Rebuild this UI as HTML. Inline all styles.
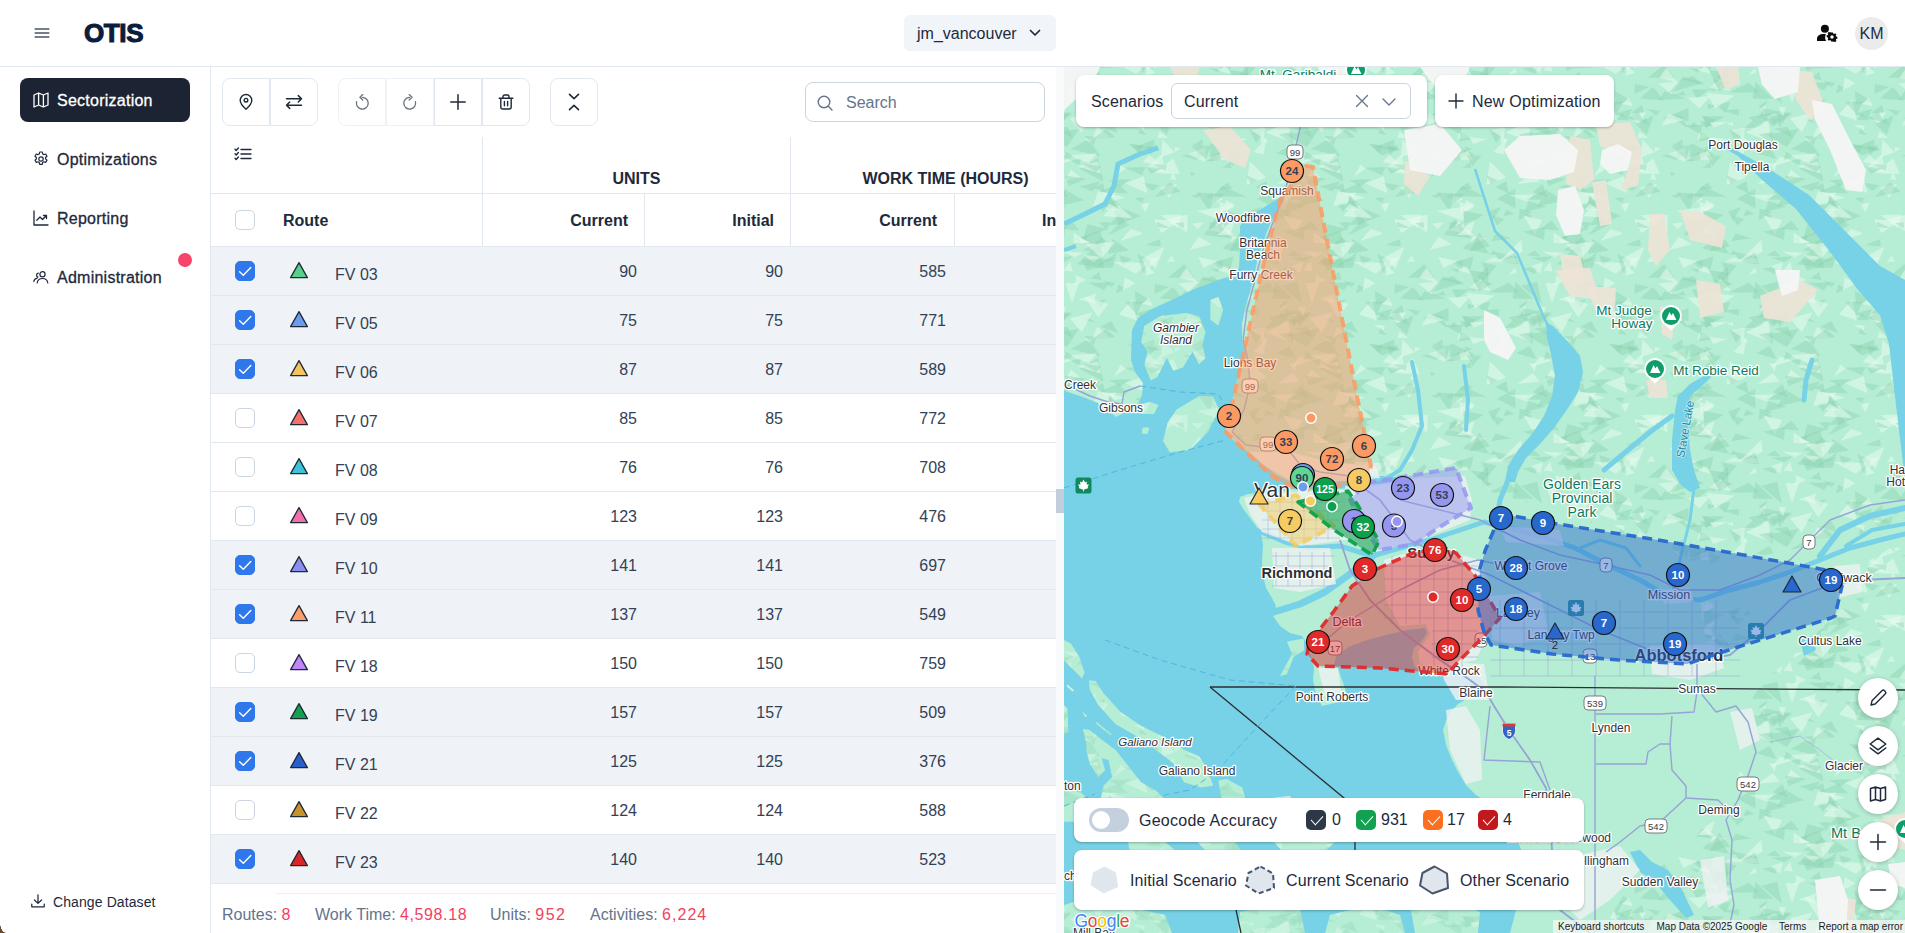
<!DOCTYPE html>
<html lang="en">
<head>
<meta charset="utf-8">
<title>OTIS - Sectorization</title>
<style>
*{box-sizing:border-box;margin:0;padding:0}
html,body{width:1905px;height:933px;overflow:hidden;background:#fff}
body{font-family:"Liberation Sans",Arial,sans-serif;color:#1e293b;font-size:16px;position:relative}
.abs{position:absolute}
#header{position:absolute;left:0;top:0;width:1905px;height:67px;border-bottom:1px solid #e2e8f0;background:#fff}
#logo{position:absolute;left:84px;top:17px;font-weight:700;font-size:26px;line-height:32px;color:#0c1c3c;letter-spacing:-0.4px;-webkit-text-stroke:1.1px #0c1c3c}
#dataset{position:absolute;left:904px;top:15px;width:152px;height:36px;background:#f1f5f9;border-radius:6px;font-size:16px;line-height:37px;padding-left:13px;color:#1e293b}
#avatar{position:absolute;left:1855px;top:17px;width:33px;height:33px;border-radius:50%;background:#ebebeb;text-align:center;line-height:34px;font-size:16px;color:#1f2f46}
#sidebar{position:absolute;left:0;top:67px;width:211px;height:866px;border-right:1px solid #e2e8f0;background:#fff}
.nav{position:absolute;left:20px;width:170px;height:44px;border-radius:8px;font-size:16px;line-height:46px;color:#1e293b;padding-left:37px;white-space:nowrap;letter-spacing:.25px;-webkit-text-stroke:.3px currentColor}
.nav svg{position:absolute;left:13px;top:14px}
.nav.active{background:#1c2434;color:#fff}
.tbtn{position:absolute;top:78px;height:48px;border:1px solid #e2e8f0;background:#fff}
.tbtn svg{position:absolute;left:50%;top:50%;transform:translate(-50%,-50%)}
#search{position:absolute;left:805px;top:82px;width:240px;height:40px;border:1px solid #cbd5e1;border-radius:8px;font-size:16px;line-height:39px;padding-left:40px;color:#64748b}
.vline{position:absolute;width:1px;background:#e2e8f0}
.hline{position:absolute;height:1px;background:#e2e8f0}
.th{position:absolute;font-weight:700;font-size:16px;color:#1e293b;white-space:nowrap;line-height:20px}
.row{position:absolute;left:211px;width:845px;height:49px;border-bottom:1px solid #e2e8f0}
.row.sel{background:#eff3f8}
.cb{position:absolute;left:24px;top:14px;width:20px;height:20px;border-radius:5px;border:1px solid #cbd5e1;background:#fff}
.cb.on{background:#2e78ec;border-color:#2e78ec}
.cb svg{position:absolute;left:-1px;top:-1px}
.tri{position:absolute;left:78px;top:14px}
.rn{position:absolute;left:124px;top:18px;font-size:16px;line-height:20px;color:#334155;white-space:nowrap}
.num{position:absolute;top:15px;font-size:16px;line-height:20px;color:#334155;text-align:right;white-space:nowrap}
.n1{right:419px}.n2{right:273px}.n3{right:110px}
#footer{position:absolute;left:211px;top:894px;width:845px;height:39px;background:#fff;font-size:16px;line-height:20px;color:#64748b;white-space:nowrap}
#footer span{position:absolute;top:11px}
#footer b{font-weight:400;color:#f43f5e;letter-spacing:.45px}
#gutter{position:absolute;left:1056px;top:67px;width:8px;height:866px;background:#f8fafc}
#map{position:absolute;left:1064px;top:67px;width:841px;height:866px;overflow:hidden;background:#b5ecd3}
.panel{position:absolute;background:#fff;border-radius:8px;box-shadow:0 1px 3px rgba(0,0,0,.18),0 1px 2px rgba(0,0,0,.1)}
.rbtn{position:absolute;left:794px;width:40px;height:40px;border-radius:50%;background:#fff;box-shadow:0 1px 4px rgba(0,0,0,.25)}
.rbtn svg{position:absolute;left:10px;top:10px}
.gc{position:absolute;top:12px;width:20px;height:20px;border-radius:5px}
.gc:after{content:"";position:absolute;left:5px;top:4.500px;width:11px;height:6px;border-left:1.600px solid #fff;border-bottom:1.600px solid #fff;transform:rotate(-48deg) skewX(-6deg);transform-origin:center}
.gt{position:absolute;top:12px;font-size:16px;line-height:20px;color:#1e293b;white-space:nowrap}
.lt{position:absolute;top:21px;font-size:16px;line-height:20px;color:#1e293b;white-space:nowrap;letter-spacing:.12px}
</style>
</head>
<body>
<div id="header">
  <svg class="abs" style="left:33px;top:24px" width="18" height="18" viewBox="0 0 18 18" fill="none" stroke="#475569" stroke-width="1.5" stroke-linecap="round"><path d="M2.2 5.1h13.6M2.2 9h13.6M2.2 12.9h13.6"/></svg>
  <div id="logo">OTIS</div>
  <div id="dataset">jm_vancouver
    <svg class="abs" style="left:124px;top:12px" width="14" height="12" viewBox="0 0 14 12" fill="none" stroke="#1e293b" stroke-width="1.7" stroke-linecap="round" stroke-linejoin="round"><path d="M2.5 3.5 7 8l4.5-4.500"/></svg>
  </div>
  <svg class="abs" style="left:1815px;top:23px" width="24" height="22" viewBox="0 0 24 22" fill="#0b0b0b"><circle cx="9.900" cy="5.800" r="4"/><path d="M2 18v-2.200c0-3 2.700-4.800 6.600-4.800.9 0 1.700.1 2.400.2-.6 1-.9 2-.9 3.200 0 1.300.4 2.500 1.100 3.600z"/><g transform="translate(17 14) scale(.92)"><circle r="6.300" fill="#fff"/><path d="M-1-5h2l.3 1.300 1 .4 1.100-.7 1.400 1.400-.7 1.100.4 1 1.300.3v2l-1.300.3-.4 1 .7 1.100-1.400 1.400-1.100-.7-1 .4L1 5h-2l-.3-1.300-1-.4-1.100.7-1.400-1.400.7-1.100-.4-1L-5.800.2v-2l1.300-.3.4-1-.7-1.100 1.400-1.400 1.100.7 1-.4z"/><circle r="1.900" fill="#fff"/></g></svg>
  <div id="avatar">KM</div>
</div>

<div id="sidebar">
  <div class="nav active" style="top:11px"><svg width="16" height="16" viewBox="0 0 16 16" fill="none" stroke="#fff" stroke-width="1.300" stroke-linejoin="round"><path d="M1 3 5.600 1l4.800 2L15 1v12l-4.600 2-4.800-2L1 15zM5.600 1v12M10.400 3v12"/></svg>Sectorization</div>
  <div class="nav" style="top:70px"><svg width="16" height="16" viewBox="0 0 16 16" fill="none" stroke="#1e293b" stroke-width="1.200" stroke-linejoin="round"><path d="M6.700 1h2.600l.4 1.900 1.200.7 1.800-.6 1.300 2.200-1.400 1.300v1.400l1.400 1.300-1.300 2.200-1.800-.6-1.200.7-.4 1.900H6.700l-.4-1.900-1.200-.7-1.800.6L2 9.200l1.400-1.300V6.500L2 5.200 3.300 3l1.800.6 1.200-.7z"/><circle cx="8" cy="8" r="2.200"/></svg>Optimizations</div>
  <div class="nav" style="top:129px"><svg width="16" height="16" viewBox="0 0 16 16" fill="none" stroke="#1e293b" stroke-width="1.300" stroke-linecap="round" stroke-linejoin="round"><path d="M1 1v14h14"/><path d="M3.800 10.200 7 7l2.500 2.500L13.500 5.500M10.500 5.500h3v3"/></svg>Reporting</div>
  <div class="nav" style="top:188px"><svg width="16" height="16" viewBox="0 0 16 16" fill="none" stroke="#1e293b" stroke-width="1.200" stroke-linecap="round" stroke-linejoin="round"><circle cx="9.500" cy="5.300" r="2.600"/><path d="M4.200 14c.4-2.900 2.500-4.500 5.300-4.500s4.900 1.600 5.300 4.500"/><path d="M5.300 4.200a2 2 0 0 0-.3 3.900M.8 12.500c.3-1.900 1.500-3.100 3.400-3.400"/></svg>Administration</div>
  <div class="abs" style="left:178px;top:186px;width:14px;height:14px;border-radius:50%;background:#f6446a"></div>
  <svg class="abs" style="left:30px;top:826px" width="16" height="16" viewBox="0 0 18 18" fill="none" stroke="#1e293b" stroke-width="1.400" stroke-linecap="round" stroke-linejoin="round"><path d="M9 2v9.500M5 7.800l4 3.900 4-3.900M2 12.500v3h14v-3"/></svg>
  <div class="abs" style="left:53px;top:825px;font-size:14px;line-height:20px;color:#1e293b;white-space:nowrap;letter-spacing:.1px">Change Dataset</div>
</div>

<div class="tbtn" style="left:222px;width:48px;border-radius:8px 0 0 8px"><svg width="18" height="18" viewBox="0 0 18 18" fill="none" stroke="#1e293b" stroke-width="1.400" stroke-linejoin="round"><path d="M9 16.200S3.200 11.300 3.200 7.300a5.800 5.800 0 0 1 11.600 0c0 4-5.800 8.900-5.800 8.900z"/><circle cx="9" cy="7.200" r="1.800"/></svg></div>
<div class="tbtn" style="left:270px;width:48px;border-radius:0 8px 8px 0"><svg width="18" height="18" viewBox="0 0 18 18" fill="none" stroke="#1e293b" stroke-width="1.500" stroke-linecap="round" stroke-linejoin="round"><path d="M1.500 5.800h15M13.300 2.600l3.200 3.200-3.200 3.200M16.500 12.200h-15M4.700 9l-3.200 3.200 3.200 3.200"/></svg></div>
<div class="tbtn" style="left:338px;width:48px;border-radius:8px 0 0 8px;border-color:#eef2f6"><svg width="18" height="18" viewBox="0 0 18 18" fill="none" stroke="#6b7280" stroke-width="1.300" stroke-linecap="round" stroke-linejoin="round"><path d="M9.300 4.300a5.900 5.900 0 1 1-5.700 4.400"/><path d="M9.800 1.600 6.900 4.300l2.900 2.700"/></svg></div>
<div class="tbtn" style="left:386px;width:48px;border-color:#eef2f6"><svg width="18" height="18" viewBox="0 0 18 18" fill="none" stroke="#6b7280" stroke-width="1.300" stroke-linecap="round" stroke-linejoin="round"><path d="M8.700 4.300a5.900 5.900 0 1 0 5.700 4.400"/><path d="M8.200 1.600l2.900 2.700-2.900 2.700"/></svg></div>
<div class="tbtn" style="left:434px;width:48px"><svg width="18" height="18" viewBox="0 0 18 18" fill="none" stroke="#1e293b" stroke-width="1.500" stroke-linecap="round"><path d="M9 1.800v14.400M1.800 9h14.400"/></svg></div>
<div class="tbtn" style="left:482px;width:48px;border-radius:0 8px 8px 0"><svg width="18" height="18" viewBox="0 0 18 18" fill="none" stroke="#1e293b" stroke-width="1.400" stroke-linecap="round" stroke-linejoin="round"><path d="M2.200 5.200h13.600M6 5V3.600c0-1 .7-1.600 1.600-1.600h2.800c.9 0 1.600.6 1.600 1.600V5M3.800 5.400V14c0 1.100.8 2 2 2h6.400c1.200 0 2-.9 2-2V5.400M7.400 8.500v4.200M10.600 8.500v4.200"/></svg></div>
<div class="tbtn" style="left:550px;width:48px;border-radius:8px"><svg width="18" height="22" viewBox="0 0 18 22" fill="none" stroke="#1e293b" stroke-width="1.600" stroke-linecap="round" stroke-linejoin="round"><path d="M4.500 3.300 9 7.600l4.500-4.300M4.500 18.700 9 14.400l4.500 4.300"/></svg></div>
<div id="search"><svg class="abs" style="left:10px;top:11px" width="18" height="18" viewBox="0 0 18 18" fill="none" stroke="#64748b" stroke-width="1.400" stroke-linecap="round"><circle cx="8" cy="8" r="5.800"/><path d="M12.300 12.300 16 16"/></svg>Search</div>

<svg class="abs" style="left:234px;top:146px" width="18" height="16" viewBox="0 0 18 16" fill="none" stroke="#1e293b" stroke-width="1.400" stroke-linecap="round" stroke-linejoin="round"><path d="M7 3.500h10M7 8h10M7 12.500h10M1 3.300l1.200 1.200L4.400 2M1 7.800 2.200 9l2.200-2.500M1 12.300l1.200 1.200 2.200-2.500"/></svg>
<div class="vline" style="left:482px;top:137px;height:109px"></div>
<div class="vline" style="left:790px;top:137px;height:109px"></div>
<div class="vline" style="left:644px;top:194px;height:52px"></div>
<div class="vline" style="left:954px;top:194px;height:52px"></div>
<div class="hline" style="left:211px;top:193px;width:845px"></div>
<div class="hline" style="left:211px;top:246px;width:845px"></div>
<div class="th" style="left:483px;width:307px;top:169px;text-align:center">UNITS</div>
<div class="th" style="left:791px;width:309px;top:169px;text-align:center">WORK TIME (HOURS)</div>
<div class="cb" style="left:235px;top:210px"></div>
<div class="th" style="left:283px;top:211px">Route</div>
<div class="th" style="right:1277px;top:211px">Current</div>
<div class="th" style="right:1131px;top:211px">Initial</div>
<div class="th" style="right:968px;top:211px">Current</div>
<div class="abs" style="left:955px;top:194px;width:101px;height:51px;overflow:hidden"><div class="th" style="left:87px;top:17px">Initial</div></div>
<div class="row sel" style="top:247px"><div class="cb on"><svg width="20" height="20" viewBox="0 0 20 20" fill="none" stroke="#fff" stroke-width="1.400" stroke-linecap="round" stroke-linejoin="round"><path d="M4.600 10.700l3.700 3.600 7.500-7.800"/></svg></div><svg class="tri" width="20" height="18" viewBox="0 0 20 18"><path d="M10 1.600 18.400 16.600H1.600z" fill="#56d08a" stroke="#1f2937" stroke-width="1.300" stroke-linejoin="round"/></svg><div class="rn">FV 03</div><div class="num n1">90</div><div class="num n2">90</div><div class="num n3">585</div></div>
<div class="row sel" style="top:296px"><div class="cb on"><svg width="20" height="20" viewBox="0 0 20 20" fill="none" stroke="#fff" stroke-width="1.400" stroke-linecap="round" stroke-linejoin="round"><path d="M4.600 10.700l3.700 3.600 7.500-7.800"/></svg></div><svg class="tri" width="20" height="18" viewBox="0 0 20 18"><path d="M10 1.600 18.400 16.600H1.600z" fill="#6a9cf0" stroke="#1f2937" stroke-width="1.300" stroke-linejoin="round"/></svg><div class="rn">FV 05</div><div class="num n1">75</div><div class="num n2">75</div><div class="num n3">771</div></div>
<div class="row sel" style="top:345px"><div class="cb on"><svg width="20" height="20" viewBox="0 0 20 20" fill="none" stroke="#fff" stroke-width="1.400" stroke-linecap="round" stroke-linejoin="round"><path d="M4.600 10.700l3.700 3.600 7.500-7.800"/></svg></div><svg class="tri" width="20" height="18" viewBox="0 0 20 18"><path d="M10 1.600 18.400 16.600H1.600z" fill="#f5c45e" stroke="#1f2937" stroke-width="1.300" stroke-linejoin="round"/></svg><div class="rn">FV 06</div><div class="num n1">87</div><div class="num n2">87</div><div class="num n3">589</div></div>
<div class="row" style="top:394px"><div class="cb"></div><svg class="tri" width="20" height="18" viewBox="0 0 20 18"><path d="M10 1.600 18.400 16.600H1.600z" fill="#f8706c" stroke="#1f2937" stroke-width="1.300" stroke-linejoin="round"/></svg><div class="rn">FV 07</div><div class="num n1">85</div><div class="num n2">85</div><div class="num n3">772</div></div>
<div class="row" style="top:443px"><div class="cb"></div><svg class="tri" width="20" height="18" viewBox="0 0 20 18"><path d="M10 1.600 18.400 16.600H1.600z" fill="#3cc3d8" stroke="#1f2937" stroke-width="1.300" stroke-linejoin="round"/></svg><div class="rn">FV 08</div><div class="num n1">76</div><div class="num n2">76</div><div class="num n3">708</div></div>
<div class="row" style="top:492px"><div class="cb"></div><svg class="tri" width="20" height="18" viewBox="0 0 20 18"><path d="M10 1.600 18.400 16.600H1.600z" fill="#f46fa9" stroke="#1f2937" stroke-width="1.300" stroke-linejoin="round"/></svg><div class="rn">FV 09</div><div class="num n1">123</div><div class="num n2">123</div><div class="num n3">476</div></div>
<div class="row sel" style="top:541px"><div class="cb on"><svg width="20" height="20" viewBox="0 0 20 20" fill="none" stroke="#fff" stroke-width="1.400" stroke-linecap="round" stroke-linejoin="round"><path d="M4.600 10.700l3.700 3.600 7.500-7.800"/></svg></div><svg class="tri" width="20" height="18" viewBox="0 0 20 18"><path d="M10 1.600 18.400 16.600H1.600z" fill="#8b8df0" stroke="#1f2937" stroke-width="1.300" stroke-linejoin="round"/></svg><div class="rn">FV 10</div><div class="num n1">141</div><div class="num n2">141</div><div class="num n3">697</div></div>
<div class="row sel" style="top:590px"><div class="cb on"><svg width="20" height="20" viewBox="0 0 20 20" fill="none" stroke="#fff" stroke-width="1.400" stroke-linecap="round" stroke-linejoin="round"><path d="M4.600 10.700l3.700 3.600 7.500-7.800"/></svg></div><svg class="tri" width="20" height="18" viewBox="0 0 20 18"><path d="M10 1.600 18.400 16.600H1.600z" fill="#fc9d6a" stroke="#1f2937" stroke-width="1.300" stroke-linejoin="round"/></svg><div class="rn">FV 11</div><div class="num n1">137</div><div class="num n2">137</div><div class="num n3">549</div></div>
<div class="row" style="top:639px"><div class="cb"></div><svg class="tri" width="20" height="18" viewBox="0 0 20 18"><path d="M10 1.600 18.400 16.600H1.600z" fill="#c084fc" stroke="#1f2937" stroke-width="1.300" stroke-linejoin="round"/></svg><div class="rn">FV 18</div><div class="num n1">150</div><div class="num n2">150</div><div class="num n3">759</div></div>
<div class="row sel" style="top:688px"><div class="cb on"><svg width="20" height="20" viewBox="0 0 20 20" fill="none" stroke="#fff" stroke-width="1.400" stroke-linecap="round" stroke-linejoin="round"><path d="M4.600 10.700l3.700 3.600 7.500-7.800"/></svg></div><svg class="tri" width="20" height="18" viewBox="0 0 20 18"><path d="M10 1.600 18.400 16.600H1.600z" fill="#12a150" stroke="#1f2937" stroke-width="1.300" stroke-linejoin="round"/></svg><div class="rn">FV 19</div><div class="num n1">157</div><div class="num n2">157</div><div class="num n3">509</div></div>
<div class="row sel" style="top:737px"><div class="cb on"><svg width="20" height="20" viewBox="0 0 20 20" fill="none" stroke="#fff" stroke-width="1.400" stroke-linecap="round" stroke-linejoin="round"><path d="M4.600 10.700l3.700 3.600 7.500-7.800"/></svg></div><svg class="tri" width="20" height="18" viewBox="0 0 20 18"><path d="M10 1.600 18.400 16.600H1.600z" fill="#2a5fc9" stroke="#1f2937" stroke-width="1.300" stroke-linejoin="round"/></svg><div class="rn">FV 21</div><div class="num n1">125</div><div class="num n2">125</div><div class="num n3">376</div></div>
<div class="row" style="top:786px"><div class="cb"></div><svg class="tri" width="20" height="18" viewBox="0 0 20 18"><path d="M10 1.600 18.400 16.600H1.600z" fill="#c8922a" stroke="#1f2937" stroke-width="1.300" stroke-linejoin="round"/></svg><div class="rn">FV 22</div><div class="num n1">124</div><div class="num n2">124</div><div class="num n3">588</div></div>
<div class="row sel" style="top:835px"><div class="cb on"><svg width="20" height="20" viewBox="0 0 20 20" fill="none" stroke="#fff" stroke-width="1.400" stroke-linecap="round" stroke-linejoin="round"><path d="M4.600 10.700l3.700 3.600 7.500-7.800"/></svg></div><svg class="tri" width="20" height="18" viewBox="0 0 20 18"><path d="M10 1.600 18.400 16.600H1.600z" fill="#dc2626" stroke="#1f2937" stroke-width="1.300" stroke-linejoin="round"/></svg><div class="rn">FV 23</div><div class="num n1">140</div><div class="num n2">140</div><div class="num n3">523</div></div>
<div class="hline" style="left:275px;top:893px;width:781px;background:#eef1f5"></div>
<div id="footer"><span style="left:11px">Routes: <b>8</b></span><span style="left:104px">Work Time: <b style="letter-spacing:.600px">4,598.18</b></span><span style="left:279px">Units: <b style="letter-spacing:1.400px">952</b></span><span style="left:379px">Activities: <b style="letter-spacing:1.050px">6,224</b></span></div>
<div id="gutter"><div class="abs" style="left:0;top:422px;width:8px;height:24px;background:#c3cedc"></div></div>

<div id="map">
<svg class="abs" style="left:0;top:0" width="841" height="866" viewBox="1064 67 841 866" font-family="Liberation Sans, Arial, sans-serif">
<rect x="1064" y="67" width="841" height="866" fill="#b6edd5"/>
<defs><pattern id="hs" x="1064" y="67" width="240" height="200" patternUnits="userSpaceOnUse">
<polygon points="87.7,33.7 72.1,37.7 70.8,23.7" fill="#86cfaa" fill-opacity="0.38"/>
<polygon points="36.4,89.5 6.8,82.1 24.6,71.7" fill="#86cfaa" fill-opacity="0.38"/>
<polygon points="213.9,60.8 200.1,61.1 208.5,54.1" fill="#86cfaa" fill-opacity="0.38"/>
<polygon points="11.8,8.2 22.4,12.9 11.5,17.8" fill="#e6faef" fill-opacity="0.55"/>
<polygon points="66.7,111.9 56.1,119.7 45.1,113.3" fill="#86cfaa" fill-opacity="0.38"/>
<polygon points="120.4,-3 131.2,11.6 104.2,10.6" fill="#86cfaa" fill-opacity="0.38"/>
<polygon points="120.4,197 131.2,211.6 104.2,210.6" fill="#86cfaa" fill-opacity="0.38"/>
<polygon points="190.6,185 216.5,190.6 194.6,192.5" fill="#86cfaa" fill-opacity="0.38"/>
<polygon points="166.1,7 153.5,2.9 162.8,-1.6" fill="#e6faef" fill-opacity="0.55"/>
<polygon points="166.1,207 153.5,202.9 162.8,198.4" fill="#e6faef" fill-opacity="0.55"/>
<polygon points="33.5,86.5 24.2,96.1 4.3,88.3" fill="#e6faef" fill-opacity="0.55"/>
<polygon points="37.3,40.9 31.5,34.8 41.7,32.2" fill="#86cfaa" fill-opacity="0.38"/>
<polygon points="-15.4,134.3 2.3,139.7 -20,145.2" fill="#86cfaa" fill-opacity="0.38"/>
<polygon points="224.6,134.3 242.3,139.7 220,145.2" fill="#86cfaa" fill-opacity="0.38"/>
<polygon points="105.2,19.9 90.4,26.9 91.2,16.9" fill="#86cfaa" fill-opacity="0.38"/>
<polygon points="27.6,71.1 27,75.5 20.4,72.4" fill="#e6faef" fill-opacity="0.55"/>
<polygon points="7.8,93.6 -11.4,99.6 -4.1,89.2" fill="#e6faef" fill-opacity="0.55"/>
<polygon points="247.8,93.6 228.6,99.6 235.9,89.2" fill="#e6faef" fill-opacity="0.55"/>
<polygon points="142.5,31.4 114.6,33 120.7,23.9" fill="#86cfaa" fill-opacity="0.38"/>
<polygon points="182.3,118 186,94.6 202,110.6" fill="#e6faef" fill-opacity="0.55"/>
<polygon points="61.6,101.6 49.9,110.1 56.4,97.8" fill="#e6faef" fill-opacity="0.55"/>
<polygon points="0.6,195.1 -13.4,191.1 9.1,189.3" fill="#86cfaa" fill-opacity="0.38"/>
<polygon points="240.6,195.1 226.6,191.1 249.1,189.3" fill="#86cfaa" fill-opacity="0.38"/>
<polygon points="156.2,154.7 162.8,161 155.8,165.1" fill="#86cfaa" fill-opacity="0.38"/>
<polygon points="180.5,195 189,190.4 205.4,194.5" fill="#e6faef" fill-opacity="0.55"/>
<polygon points="23.3,157.3 43.7,162.2 19.2,171.4" fill="#86cfaa" fill-opacity="0.38"/>
<polygon points="225.7,78.9 232.7,92.1 211.9,86.2" fill="#86cfaa" fill-opacity="0.38"/>
<polygon points="19,183.3 33.6,173.8 38.2,186.5" fill="#86cfaa" fill-opacity="0.38"/>
<polygon points="9.6,89.4 0,93.1 1.9,84.2" fill="#86cfaa" fill-opacity="0.38"/>
<polygon points="249.6,89.4 240,93.1 241.9,84.2" fill="#86cfaa" fill-opacity="0.38"/>
<polygon points="127.9,156.6 139.7,155.4 133.8,162.2" fill="#e6faef" fill-opacity="0.55"/>
<polygon points="96.2,120.4 112.9,116.8 105.2,130.9" fill="#e6faef" fill-opacity="0.55"/>
<polygon points="234.3,52.2 229.2,58.9 217.1,50.8" fill="#86cfaa" fill-opacity="0.38"/>
<polygon points="166.5,167.6 142.9,163.1 170.8,152.7" fill="#e6faef" fill-opacity="0.55"/>
<polygon points="97.3,87.4 102.5,105.6 82.5,100.7" fill="#e6faef" fill-opacity="0.55"/>
<polygon points="16.1,110.1 0.6,114.3 7,102.5" fill="#e6faef" fill-opacity="0.55"/>
<polygon points="24.8,50.4 31.7,56.1 20.4,52.9" fill="#86cfaa" fill-opacity="0.38"/>
<polygon points="235.9,114.4 213.4,117.1 228.6,106" fill="#e6faef" fill-opacity="0.55"/>
<polygon points="23.4,168.4 22.3,176.6 15.8,171.5" fill="#86cfaa" fill-opacity="0.38"/>
<polygon points="63.4,21.7 52.1,26.6 54.1,17.6" fill="#86cfaa" fill-opacity="0.38"/>
<polygon points="91.3,5.7 81.2,8.8 83.9,-0" fill="#e6faef" fill-opacity="0.55"/>
<polygon points="91.3,205.7 81.2,208.8 83.9,200" fill="#e6faef" fill-opacity="0.55"/>
<polygon points="90.3,105.9 109.1,91.4 115.9,107" fill="#e6faef" fill-opacity="0.55"/>
<polygon points="104.1,70.9 93.3,70.9 95.6,64.5" fill="#e6faef" fill-opacity="0.55"/>
<polygon points="159.6,60.1 156,53.5 171.8,58.7" fill="#86cfaa" fill-opacity="0.38"/>
<polygon points="58.1,198.4 55.2,187.7 67.5,192" fill="#86cfaa" fill-opacity="0.38"/>
<polygon points="71.3,16.3 58.6,24.2 60.8,10.3" fill="#e6faef" fill-opacity="0.55"/>
<polygon points="165.7,178.1 168.7,168.9 182.3,171.3" fill="#e6faef" fill-opacity="0.55"/>
<polygon points="159.6,154.2 132.9,144 161.2,139.4" fill="#e6faef" fill-opacity="0.55"/>
<polygon points="170.8,137.5 161.3,145.2 161.7,133" fill="#e6faef" fill-opacity="0.55"/>
<polygon points="166.5,94.8 167.4,101 158.4,100.8" fill="#86cfaa" fill-opacity="0.38"/>
<polygon points="17.7,65.5 6,51.2 28.5,45.6" fill="#e6faef" fill-opacity="0.55"/>
<polygon points="154.3,131.5 141.7,130.1 147.4,125.9" fill="#86cfaa" fill-opacity="0.38"/>
<polygon points="157.8,146.4 154.7,134.5 170.8,139.8" fill="#e6faef" fill-opacity="0.55"/>
<polygon points="233.3,-0.1 230.9,6.9 217.5,1.2" fill="#86cfaa" fill-opacity="0.38"/>
<polygon points="233.3,199.9 230.9,206.9 217.5,201.2" fill="#86cfaa" fill-opacity="0.38"/>
<polygon points="39.6,114.7 15.9,101.7 34,90.9" fill="#86cfaa" fill-opacity="0.38"/>
<polygon points="-0.6,3.3 6.3,-5.4 8.6,4.6" fill="#e6faef" fill-opacity="0.55"/>
<polygon points="-0.6,203.3 6.3,194.6 8.6,204.6" fill="#e6faef" fill-opacity="0.55"/>
<polygon points="239.4,3.3 246.3,-5.4 248.6,4.6" fill="#e6faef" fill-opacity="0.55"/>
<polygon points="239.4,203.3 246.3,194.6 248.6,204.6" fill="#e6faef" fill-opacity="0.55"/>
<polygon points="204.6,15.8 215.6,25.4 184.6,25.6" fill="#86cfaa" fill-opacity="0.38"/>
<polygon points="105.3,57.8 98,54.7 101.8,51.1" fill="#86cfaa" fill-opacity="0.38"/>
<polygon points="100.3,-20.2 91.6,1.6 80.1,-9.6" fill="#e6faef" fill-opacity="0.55"/>
<polygon points="100.3,179.8 91.6,201.6 80.1,190.4" fill="#e6faef" fill-opacity="0.55"/>
<polygon points="113.5,161.2 96.4,148.1 117.6,147.4" fill="#e6faef" fill-opacity="0.55"/>
<polygon points="-10.1,59.1 -14,49.4 8.9,46.3" fill="#86cfaa" fill-opacity="0.38"/>
<polygon points="229.9,59.1 226,49.4 248.9,46.3" fill="#86cfaa" fill-opacity="0.38"/>
<polygon points="43.7,186.7 48.9,172.2 65.4,183.4" fill="#86cfaa" fill-opacity="0.38"/>
<polygon points="125.5,183 134.7,169.7 148,177.3" fill="#e6faef" fill-opacity="0.55"/>
<polygon points="33.9,94.5 37,106.7 13.2,99.2" fill="#e6faef" fill-opacity="0.55"/>
<polygon points="210.8,0.7 212.7,5.2 204.5,8.4" fill="#e6faef" fill-opacity="0.55"/>
<polygon points="213.4,195.9 194.1,195.5 209.3,189" fill="#e6faef" fill-opacity="0.55"/>
<polygon points="108.8,105.1 112.8,112.9 106.3,112.4" fill="#e6faef" fill-opacity="0.55"/>
<polygon points="162.1,21.5 170,18.2 171.9,24.4" fill="#86cfaa" fill-opacity="0.38"/>
<polygon points="-20.6,132.5 4.4,121.9 -2.6,132.7" fill="#86cfaa" fill-opacity="0.38"/>
<polygon points="219.4,132.5 244.4,121.9 237.4,132.7" fill="#86cfaa" fill-opacity="0.38"/>
<polygon points="161.8,79.8 168.1,81.5 157.7,89.7" fill="#86cfaa" fill-opacity="0.38"/>
<polygon points="188.7,153.7 184.3,144.5 197.1,139.9" fill="#86cfaa" fill-opacity="0.38"/>
<polygon points="230.7,104.6 225.1,96.4 232.5,96.4" fill="#e6faef" fill-opacity="0.55"/>
<polygon points="26.1,11.4 35.3,4.7 37.3,13.1" fill="#86cfaa" fill-opacity="0.38"/>
<polygon points="221.3,146.6 228.8,148.7 225,152.4" fill="#86cfaa" fill-opacity="0.38"/>
<polygon points="238,36.8 217.1,18.7 233.2,14.7" fill="#86cfaa" fill-opacity="0.38"/>
<polygon points="223.8,33.2 217.7,46 214.8,39.1" fill="#86cfaa" fill-opacity="0.38"/>
<polygon points="228.4,46 214.4,60.3 204.7,50" fill="#86cfaa" fill-opacity="0.38"/>
<polygon points="83.8,-3.7 72,6.7 49.4,-5.3" fill="#e6faef" fill-opacity="0.55"/>
<polygon points="83.8,196.3 72,206.7 49.4,194.7" fill="#e6faef" fill-opacity="0.55"/>
<polygon points="86,47.9 102,44.9 94.8,58.3" fill="#e6faef" fill-opacity="0.55"/>
<polygon points="76.5,59.4 82.5,68.2 74.7,66.7" fill="#86cfaa" fill-opacity="0.38"/>
<polygon points="87.6,-6.3 78.7,6 73.3,-13" fill="#86cfaa" fill-opacity="0.38"/>
<polygon points="87.6,193.7 78.7,206 73.3,187" fill="#86cfaa" fill-opacity="0.38"/>
<polygon points="105.8,115.2 116.6,124.7 90.2,130.3" fill="#86cfaa" fill-opacity="0.38"/>
<polygon points="181.8,46.3 171.3,37.2 186.3,35.1" fill="#86cfaa" fill-opacity="0.38"/>
<polygon points="66.3,157.5 43.2,168.7 55,156.5" fill="#86cfaa" fill-opacity="0.38"/>
<polygon points="21.2,29.7 44.2,37.1 34.1,50.5" fill="#e6faef" fill-opacity="0.55"/>
<polygon points="28.5,124.6 15.5,119.4 36.9,114.1" fill="#86cfaa" fill-opacity="0.38"/>
<polygon points="8.6,70.6 -9.3,61.4 3.8,59.8" fill="#86cfaa" fill-opacity="0.38"/>
<polygon points="248.6,70.6 230.7,61.4 243.8,59.8" fill="#86cfaa" fill-opacity="0.38"/>
<polygon points="133.9,131.6 126.7,128.8 136.9,126.1" fill="#86cfaa" fill-opacity="0.38"/>
<polygon points="96.8,81.9 77.7,88.6 67.6,77.7" fill="#86cfaa" fill-opacity="0.38"/>
<polygon points="189.6,84.9 202.7,70.8 199.5,87.6" fill="#e6faef" fill-opacity="0.55"/>
<polygon points="86.8,107 82.2,99.7 98.9,101.3" fill="#86cfaa" fill-opacity="0.38"/>
<polygon points="12.8,-2.7 36.5,-25 39.9,0.6" fill="#86cfaa" fill-opacity="0.38"/>
<polygon points="12.8,197.3 36.5,175 39.9,200.6" fill="#86cfaa" fill-opacity="0.38"/>
<polygon points="194.8,41.8 195,48.7 179.6,43.7" fill="#86cfaa" fill-opacity="0.38"/>
<polygon points="77,149 54.7,157.5 48.4,136.7" fill="#86cfaa" fill-opacity="0.38"/>
<polygon points="140,58.1 158.5,57.8 156.5,67.4" fill="#86cfaa" fill-opacity="0.38"/>
<polygon points="45.4,158.2 54.5,146.4 63.6,156.7" fill="#86cfaa" fill-opacity="0.38"/>
<polygon points="133.2,15.4 115.5,10.7 122.5,0.8" fill="#e6faef" fill-opacity="0.55"/>
<polygon points="35.9,163.6 41.6,180.4 10.6,172.5" fill="#86cfaa" fill-opacity="0.38"/>
<polygon points="185.6,187.8 189.6,182.8 193.1,187.5" fill="#86cfaa" fill-opacity="0.38"/>
<polygon points="215.6,42.3 221.9,37.8 220.3,48" fill="#e6faef" fill-opacity="0.55"/>
<polygon points="34.9,155.6 47,155.2 42.5,162.7" fill="#86cfaa" fill-opacity="0.38"/>
<polygon points="-1.5,116.9 3.6,130.5 -11.1,125.3" fill="#86cfaa" fill-opacity="0.38"/>
<polygon points="238.5,116.9 243.6,130.5 228.9,125.3" fill="#86cfaa" fill-opacity="0.38"/>
<polygon points="174.6,22.8 165.3,3.1 185,6" fill="#86cfaa" fill-opacity="0.38"/>
<polygon points="29.7,120.7 39.1,115.9 41,125.3" fill="#86cfaa" fill-opacity="0.38"/>
<polygon points="20.6,69.1 32.8,69.6 30,77.9" fill="#86cfaa" fill-opacity="0.38"/>
<polygon points="46.1,15.7 39.8,23.3 23.8,15.6" fill="#86cfaa" fill-opacity="0.38"/>
<polygon points="146.6,76 171.1,87.5 145.7,94.2" fill="#86cfaa" fill-opacity="0.38"/>
<polygon points="193,-1.6 183.6,9.8 177.4,-4.8" fill="#86cfaa" fill-opacity="0.38"/>
<polygon points="193,198.4 183.6,209.8 177.4,195.2" fill="#86cfaa" fill-opacity="0.38"/>
<polygon points="80.9,58.4 79.6,63.7 69.6,57.7" fill="#e6faef" fill-opacity="0.55"/>
<polygon points="112.2,48.2 102.7,41.9 116.3,44.1" fill="#86cfaa" fill-opacity="0.38"/>
<polygon points="117.2,88.6 143.2,84.8 132.1,92.8" fill="#86cfaa" fill-opacity="0.38"/>
<polygon points="51.8,135.4 68.6,151.2 39,149.3" fill="#e6faef" fill-opacity="0.55"/>
<polygon points="169.6,-10.5 166.3,2.9 150.7,-5" fill="#86cfaa" fill-opacity="0.38"/>
<polygon points="169.6,189.5 166.3,202.9 150.7,195" fill="#86cfaa" fill-opacity="0.38"/>
<polygon points="159.4,17.9 136.8,12.2 149.1,9.3" fill="#86cfaa" fill-opacity="0.38"/>
<polygon points="158.2,119.1 182.3,129.8 149.1,129.2" fill="#86cfaa" fill-opacity="0.38"/>
<polygon points="218.6,185.1 196,193.6 217.3,172.9" fill="#e6faef" fill-opacity="0.55"/>
<polygon points="154.6,60.1 146.6,59.9 149.2,54.4" fill="#86cfaa" fill-opacity="0.38"/>
<polygon points="183.2,71.9 169.4,76.9 165.4,69.9" fill="#e6faef" fill-opacity="0.55"/>
<polygon points="81.5,145.8 76.9,137.4 85.4,135.4" fill="#e6faef" fill-opacity="0.55"/>
<polygon points="227,-0.7 239,-4.7 236.2,6.5" fill="#e6faef" fill-opacity="0.55"/>
<polygon points="227,199.3 239,195.3 236.2,206.5" fill="#e6faef" fill-opacity="0.55"/>
<polygon points="55,47.4 68.4,32.2 72.7,53.2" fill="#e6faef" fill-opacity="0.55"/>
<polygon points="90.3,72.3 90.3,83.9 72.2,79.5" fill="#86cfaa" fill-opacity="0.38"/>
<polygon points="81.4,178.1 96.1,171.9 96.6,179.5" fill="#86cfaa" fill-opacity="0.38"/>
<polygon points="211.5,141.6 192.9,131.7 211.1,122.1" fill="#86cfaa" fill-opacity="0.38"/>
<polygon points="47.6,54.2 53.8,65.7 36.4,59.7" fill="#86cfaa" fill-opacity="0.38"/>
<polygon points="48.8,0.6 29.1,1.4 52.9,-14.4" fill="#86cfaa" fill-opacity="0.38"/>
<polygon points="48.8,200.6 29.1,201.4 52.9,185.6" fill="#86cfaa" fill-opacity="0.38"/>
<polygon points="48.7,130.1 38.8,126.9 52.8,125.3" fill="#e6faef" fill-opacity="0.55"/>
<polygon points="95.7,31.6 109.2,20 119.5,33.5" fill="#86cfaa" fill-opacity="0.38"/>
<polygon points="175.1,165.5 185.9,179.3 165.6,184.8" fill="#86cfaa" fill-opacity="0.38"/>
<polygon points="89.8,152.4 114.9,153.8 97.8,166.3" fill="#e6faef" fill-opacity="0.55"/>
<polygon points="29.1,139.3 34.2,123.7 61.3,130.4" fill="#e6faef" fill-opacity="0.55"/>
<polygon points="114.2,16.3 136.9,14.5 127.1,27.2" fill="#e6faef" fill-opacity="0.55"/>
<polygon points="45.4,128.5 56.1,138.6 43.5,140.7" fill="#86cfaa" fill-opacity="0.38"/>
<polygon points="96.9,90.4 98.5,72.4 110.5,85.2" fill="#e6faef" fill-opacity="0.55"/>
<polygon points="98,38.1 99.8,45.3 86.6,46.3" fill="#86cfaa" fill-opacity="0.38"/>
<polygon points="139.7,168 151.1,151.7 167.8,171.5" fill="#86cfaa" fill-opacity="0.38"/>
<polygon points="100.5,55 82.3,51.4 94.4,44.7" fill="#86cfaa" fill-opacity="0.38"/>
<polygon points="159,131.8 147.1,139.2 149.1,128.3" fill="#e6faef" fill-opacity="0.55"/>
<polygon points="156.4,2.7 153,5.5 145.7,1.1" fill="#86cfaa" fill-opacity="0.38"/>
<polygon points="37.4,191 21.4,177.2 51.6,174.7" fill="#e6faef" fill-opacity="0.55"/>
<polygon points="45.5,128.8 55.2,141.7 42.3,142.6" fill="#86cfaa" fill-opacity="0.38"/>
<polygon points="6.7,93.7 17.4,91.7 15.1,97.9" fill="#86cfaa" fill-opacity="0.38"/>
<polygon points="153.4,167.9 161.6,161.2 170.2,168" fill="#e6faef" fill-opacity="0.55"/>
<polygon points="201.9,65.4 224.3,53.5 227.7,75" fill="#e6faef" fill-opacity="0.55"/>
<polygon points="85.6,88.1 97.9,99.1 78.5,94.9" fill="#e6faef" fill-opacity="0.55"/>
<polygon points="89,97.1 102.7,97.8 101.4,104.3" fill="#86cfaa" fill-opacity="0.38"/>
<polygon points="154.1,153 157.3,156.3 151.1,159.6" fill="#e6faef" fill-opacity="0.55"/>
<polygon points="160.3,127.3 144.2,142.4 132.6,125.5" fill="#86cfaa" fill-opacity="0.38"/>
<polygon points="168.4,93 141.4,92.5 163.9,83.8" fill="#e6faef" fill-opacity="0.55"/>
<polygon points="187.1,117 182.1,108.1 193.8,113.6" fill="#86cfaa" fill-opacity="0.38"/>
<polygon points="1.7,16.3 14.8,15.9 8,36.6" fill="#e6faef" fill-opacity="0.55"/>
<polygon points="110.1,80.8 117.1,80.8 111.5,84.9" fill="#e6faef" fill-opacity="0.55"/>
<polygon points="26.2,175.2 17,176 14.3,170.6" fill="#e6faef" fill-opacity="0.55"/>
<polygon points="202.3,142.4 210.3,146.9 199.6,149.2" fill="#86cfaa" fill-opacity="0.38"/>
<polygon points="20.2,133.2 -7.6,140.1 3.3,124.1" fill="#86cfaa" fill-opacity="0.38"/>
<polygon points="260.2,133.2 232.4,140.1 243.3,124.1" fill="#86cfaa" fill-opacity="0.38"/>
<polygon points="141.4,94.9 123.6,87.3 141.5,80.4" fill="#e6faef" fill-opacity="0.55"/>
<polygon points="231,167.3 219.2,148.5 238.3,153.3" fill="#e6faef" fill-opacity="0.55"/>
<polygon points="191.5,120.1 202.4,114.2 204.7,126.7" fill="#86cfaa" fill-opacity="0.38"/>
<polygon points="-7.7,45.6 6.9,45.3 -4.8,60.6" fill="#86cfaa" fill-opacity="0.38"/>
<polygon points="232.3,45.6 246.9,45.3 235.2,60.6" fill="#86cfaa" fill-opacity="0.38"/>
<polygon points="66.8,162 79.7,166.6 56.5,174.1" fill="#e6faef" fill-opacity="0.55"/>
<polygon points="219.2,41.5 238,44.7 214,51.3" fill="#86cfaa" fill-opacity="0.38"/>
<polygon points="187.6,148.7 200.5,151.9 193,158.4" fill="#86cfaa" fill-opacity="0.38"/>
<polygon points="34.1,138.4 46.3,136.8 39.4,145.1" fill="#86cfaa" fill-opacity="0.38"/>
<polygon points="145.1,155.5 154.2,155 145.9,162.2" fill="#86cfaa" fill-opacity="0.38"/>
<polygon points="118.9,51.5 144.6,40.8 144.5,54" fill="#86cfaa" fill-opacity="0.38"/>
<polygon points="39.3,14 51.4,16 47.5,20.1" fill="#86cfaa" fill-opacity="0.38"/>
<polygon points="19.1,187.8 35.7,189.8 29.8,195.7" fill="#e6faef" fill-opacity="0.55"/>
<polygon points="-0.9,49.5 -5.8,40 1.9,40.2" fill="#e6faef" fill-opacity="0.55"/>
<polygon points="239.1,49.5 234.2,40 241.9,40.2" fill="#e6faef" fill-opacity="0.55"/>
<polygon points="158.1,2.2 150.1,-3.2 158.8,-7.2" fill="#86cfaa" fill-opacity="0.38"/>
<polygon points="158.1,202.2 150.1,196.8 158.8,192.8" fill="#86cfaa" fill-opacity="0.38"/>
<polygon points="73,53.1 77.6,46.2 85.4,53.3" fill="#86cfaa" fill-opacity="0.38"/>
<polygon points="19.2,185.7 11,190.3 -2,184.4" fill="#e6faef" fill-opacity="0.55"/>
<polygon points="259.2,185.7 251,190.3 238,184.4" fill="#e6faef" fill-opacity="0.55"/>
<polygon points="155.1,84.4 156.9,92.9 141.7,94.4" fill="#86cfaa" fill-opacity="0.38"/>
<polygon points="30.8,177.8 37.5,169.7 43.1,174.7" fill="#86cfaa" fill-opacity="0.38"/>
<polygon points="229.3,31.8 208.5,31.8 211.5,15" fill="#86cfaa" fill-opacity="0.38"/>
<polygon points="95.3,-9.1 82.1,4.1 78.5,-8.6" fill="#e6faef" fill-opacity="0.55"/>
<polygon points="95.3,190.9 82.1,204.1 78.5,191.4" fill="#e6faef" fill-opacity="0.55"/>
<polygon points="15.2,163.6 -3,162 7.4,153.6" fill="#86cfaa" fill-opacity="0.38"/>
<polygon points="255.2,163.6 237,162 247.4,153.6" fill="#86cfaa" fill-opacity="0.38"/>
<polygon points="139.2,24.2 142,28.1 129.9,28.8" fill="#86cfaa" fill-opacity="0.38"/>
<polygon points="54.2,116.7 64.1,126.5 34.1,124.9" fill="#86cfaa" fill-opacity="0.38"/>
<polygon points="200.4,62.6 192.1,76.4 185,62.3" fill="#86cfaa" fill-opacity="0.38"/>
<polygon points="196.3,75.2 197.8,69 204.5,74.3" fill="#e6faef" fill-opacity="0.55"/>
<polygon points="191.8,166.5 207.5,171.2 187.1,174.3" fill="#86cfaa" fill-opacity="0.38"/>
<polygon points="131,106 128,110.4 126.2,105.3" fill="#86cfaa" fill-opacity="0.38"/>
<polygon points="163.4,36.5 171.5,38.6 164.2,42.8" fill="#86cfaa" fill-opacity="0.38"/>
<polygon points="32.2,105.1 18.1,96.6 37.3,99.3" fill="#86cfaa" fill-opacity="0.38"/>
<polygon points="191,28.4 171.4,41.2 162.1,26.1" fill="#e6faef" fill-opacity="0.55"/>
<polygon points="69.9,46.8 88,41.9 84,51.4" fill="#86cfaa" fill-opacity="0.38"/>
<polygon points="222.9,188.4 230.3,183.4 237.2,189.4" fill="#86cfaa" fill-opacity="0.38"/>
<polygon points="50.7,-8.8 23.1,4 17.8,-7.1" fill="#86cfaa" fill-opacity="0.38"/>
<polygon points="50.7,191.2 23.1,204 17.8,192.9" fill="#86cfaa" fill-opacity="0.38"/>
<polygon points="171.5,52.7 162,61.8 158.7,49.1" fill="#86cfaa" fill-opacity="0.38"/>
<polygon points="164.9,22.4 152.8,32 147.6,22.2" fill="#86cfaa" fill-opacity="0.38"/>
<polygon points="75.1,86.4 64.5,76.5 79.2,78.4" fill="#86cfaa" fill-opacity="0.38"/>
<polygon points="162.8,88.2 177.6,88.7 168.3,98.9" fill="#86cfaa" fill-opacity="0.38"/>
<polygon points="2.9,80.3 -17.8,67.8 15.3,61.6" fill="#86cfaa" fill-opacity="0.38"/>
<polygon points="242.9,80.3 222.2,67.8 255.3,61.6" fill="#86cfaa" fill-opacity="0.38"/>
<polygon points="25.6,175.9 9.5,175.9 9.8,165.8" fill="#e6faef" fill-opacity="0.55"/>
<polygon points="33.2,59.9 45.7,70.1 28.4,72.1" fill="#e6faef" fill-opacity="0.55"/>
<polygon points="123.7,147.5 123.3,165.8 103.2,151.9" fill="#e6faef" fill-opacity="0.55"/>
<polygon points="147.3,78.4 141.7,92.1 127.1,79.7" fill="#86cfaa" fill-opacity="0.38"/>
<polygon points="138.8,72.2 138.4,79.7 127.7,79" fill="#86cfaa" fill-opacity="0.38"/>
<polygon points="124.2,26 139.3,9.8 160.4,15.7" fill="#86cfaa" fill-opacity="0.38"/>
<polygon points="22.6,111.7 4.8,118.9 0.8,108.4" fill="#86cfaa" fill-opacity="0.38"/>
<polygon points="95.4,118.2 88.2,124.2 77.8,115.2" fill="#86cfaa" fill-opacity="0.38"/>
<polygon points="196.2,195.1 210.8,185.6 215,197.4" fill="#86cfaa" fill-opacity="0.38"/>
<polygon points="-0.1,173 -20.9,164.8 1.1,159.8" fill="#86cfaa" fill-opacity="0.38"/>
<polygon points="239.9,173 219.1,164.8 241.1,159.8" fill="#86cfaa" fill-opacity="0.38"/>
<polygon points="78.1,108.1 60.2,100.7 81.4,99.9" fill="#86cfaa" fill-opacity="0.38"/>
<polygon points="92.6,154.8 106.8,160.9 93.6,160.3" fill="#86cfaa" fill-opacity="0.38"/>
<polygon points="123.4,46.9 137.9,48.6 143,60.7" fill="#86cfaa" fill-opacity="0.38"/>
<polygon points="32,26.4 30.1,36.1 14.7,32.4" fill="#e6faef" fill-opacity="0.55"/>
<polygon points="88.9,39.2 78.2,36.9 84.8,30.4" fill="#e6faef" fill-opacity="0.55"/>
<polygon points="134,-9.9 152.9,-6.1 139.6,0.9" fill="#e6faef" fill-opacity="0.55"/>
<polygon points="134,190.1 152.9,193.9 139.6,200.9" fill="#e6faef" fill-opacity="0.55"/>
<polygon points="61.8,116.4 79.7,108.9 83.3,126.2" fill="#e6faef" fill-opacity="0.55"/>
<polygon points="119.9,161.7 110.7,156 119.7,155.6" fill="#86cfaa" fill-opacity="0.38"/>
<polygon points="94.7,83.9 88.6,82.3 92.6,77.4" fill="#86cfaa" fill-opacity="0.38"/>
<polygon points="155.4,65.5 163.4,70.3 153.4,72.9" fill="#e6faef" fill-opacity="0.55"/>
<polygon points="28.2,72.1 42.2,62.1 51.2,70.2" fill="#86cfaa" fill-opacity="0.38"/>
<polygon points="158.2,49.1 180.6,49.4 164.6,58.3" fill="#86cfaa" fill-opacity="0.38"/>
<polygon points="117.5,59 125,46.5 140.4,53" fill="#e6faef" fill-opacity="0.55"/>
<polygon points="70.5,131.6 79.8,130.3 78.8,135.8" fill="#86cfaa" fill-opacity="0.38"/>
<polygon points="184.8,54.4 169.4,60.7 166,55.6" fill="#e6faef" fill-opacity="0.55"/>
<polygon points="156.7,65.3 167.5,72.4 154.8,74.2" fill="#86cfaa" fill-opacity="0.38"/>
<polygon points="228.3,145 214.5,153.5 215.8,141.8" fill="#86cfaa" fill-opacity="0.38"/>
<polygon points="144.2,31 166.5,28.9 155.4,41.5" fill="#e6faef" fill-opacity="0.55"/>
<polygon points="189,55.5 189,59.3 182.3,55.9" fill="#e6faef" fill-opacity="0.55"/>
<polygon points="164.3,21.2 176.5,12 187.3,23.7" fill="#e6faef" fill-opacity="0.55"/>
<polygon points="159.2,143.6 179.8,147.7 160,160.1" fill="#86cfaa" fill-opacity="0.38"/>
<polygon points="183.7,-0.3 184.8,18.3 172.4,9.5" fill="#86cfaa" fill-opacity="0.38"/>
<polygon points="183.7,199.7 184.8,218.3 172.4,209.5" fill="#86cfaa" fill-opacity="0.38"/>
<polygon points="86.4,88.2 83.2,78.8 93,80.1" fill="#86cfaa" fill-opacity="0.38"/>
<polygon points="228.4,64.7 228.9,77 214.7,67.6" fill="#86cfaa" fill-opacity="0.38"/>
<polygon points="163.4,115.6 168.7,122 155.1,122.8" fill="#86cfaa" fill-opacity="0.38"/>
<polygon points="56.3,143.5 40.6,142.7 45.4,136.4" fill="#e6faef" fill-opacity="0.55"/>
<polygon points="189.2,16.5 175.3,24.5 168.3,11.9" fill="#86cfaa" fill-opacity="0.38"/>
<polygon points="230.4,127.5 222.3,134.5 205.5,128.1" fill="#e6faef" fill-opacity="0.55"/>
<polygon points="79.3,34.5 72.7,47.6 61.1,34.5" fill="#86cfaa" fill-opacity="0.38"/>
<polygon points="186,62.7 201.1,60.7 199.3,70.9" fill="#e6faef" fill-opacity="0.55"/>
<polygon points="157.9,181.3 173.6,170.3 185.3,187" fill="#86cfaa" fill-opacity="0.38"/>
<polygon points="111.1,194.5 103,195.2 107.6,188.5" fill="#e6faef" fill-opacity="0.55"/>
<polygon points="91,56.7 109.7,48.5 102.6,67.8" fill="#86cfaa" fill-opacity="0.38"/>
</pattern></defs>
<polygon points="1064,67 1905,67 1905,520 1860,540 1800,548 1740,560 1700,565 1660,545 1600,528 1560,505 1500,500 1470,470 1420,472 1380,474 1340,462 1290,448 1240,440 1226,430 1064,400" fill="url(#hs)"/>
<polygon points="1905,540 1870,560 1850,600 1800,650 1770,676 1750,700 1760,740 1740,770 1730,810 1700,830 1690,850 1640,870 1600,933 1905,933" fill="url(#hs)"/>
<polygon points="1700,596 1740,600 1760,625 1740,650 1705,640" fill="url(#hs)"/>
<polygon points="1570,136 1590,140 1594,180 1580,190 1566,184" fill="#ede3d6" fill-opacity="0.92"/>
<polygon points="1596,124 1630,122 1642,150 1638,186 1620,190 1632,160 1600,146" fill="#ede3d6" fill-opacity="0.92"/>
<polygon points="1592,182 1606,180 1612,224 1600,226" fill="#ede3d6" fill-opacity="0.92"/>
<polygon points="1650,214 1664,214 1670,250 1656,266 1648,250" fill="#ede3d6" fill-opacity="0.92"/>
<polygon points="1680,210 1700,212 1726,226 1722,248 1690,240" fill="#ede3d6" fill-opacity="0.92"/>
<polygon points="1716,67 1738,67 1740,84 1726,90" fill="#ede3d6" fill-opacity="0.92"/>
<polygon points="1790,70 1812,72 1826,110 1810,120 1796,100" fill="#ede3d6" fill-opacity="0.92"/>
<polygon points="1560,254 1580,256 1586,280 1566,290" fill="#ede3d6" fill-opacity="0.92"/>
<polygon points="1555,270 1590,268 1600,300 1570,296" fill="#ede3d6" fill-opacity="0.92"/>
<polygon points="1586,286 1616,288 1614,318 1596,312" fill="#ede3d6" fill-opacity="0.92"/>
<polygon points="1696,280 1720,284 1724,312 1700,318" fill="#ede3d6" fill-opacity="0.92"/>
<polygon points="1760,296 1800,280 1818,290 1790,322 1764,318" fill="#ede3d6" fill-opacity="0.92"/>
<polygon points="1646,380 1666,380 1668,398 1650,398" fill="#ede3d6" fill-opacity="0.92"/>
<polygon points="1226,80 1250,96 1256,120 1240,126 1224,104" fill="#ede3d6" fill-opacity="0.92"/>
<polygon points="1170,67 1200,67 1196,78 1176,80" fill="#ede3d6" fill-opacity="0.92"/>
<polygon points="1660,306 1676,310 1672,340 1662,334" fill="#ede3d6" fill-opacity="0.92"/>
<polygon points="1840,896 1856,900 1852,933 1842,933" fill="#ede3d6" fill-opacity="0.92"/>
<polygon points="1880,820 1905,812 1905,850 1890,846" fill="#ede3d6" fill-opacity="0.92"/>
<polygon points="1203,130 1230,126 1251,150 1245,168 1225,160" fill="#ede3d6" fill-opacity="0.92"/>
<polygon points="1405,160 1430,176 1418,196 1404,184" fill="#ede3d6" fill-opacity="0.92"/>
<polygon points="1504,150 1520,136 1560,134 1578,150 1574,172 1550,180 1520,178" fill="#f5f6f6" fill-opacity="0.95"/>
<polygon points="1558,190 1575,186 1584,210 1580,234 1565,236 1556,215" fill="#f5f6f6" fill-opacity="0.95"/>
<polygon points="1602,150 1618,144 1632,152 1628,170 1610,174 1600,164" fill="#f5f6f6" fill-opacity="0.95"/>
<polygon points="1758,67 1800,67 1798,92 1775,99 1762,85" fill="#f5f6f6" fill-opacity="0.95"/>
<polygon points="1812,100 1832,104 1850,140 1866,170 1862,192 1846,190 1830,150 1815,120" fill="#f5f6f6" fill-opacity="0.95"/>
<polygon points="1064,67 1100,67 1092,84 1075,100 1064,110" fill="#f5f6f6" fill-opacity="0.95"/>
<polygon points="1484,310 1500,318 1516,348 1508,360 1490,352 1484,340" fill="#f5f6f6" fill-opacity="0.95"/>
<polygon points="1318,67 1352,67 1340,80 1322,78" fill="#f5f6f6" fill-opacity="0.95"/>
<polygon points="1775,270 1800,270 1798,290 1782,296" fill="#f5f6f6" fill-opacity="0.95"/>
<polygon points="1815,880 1840,876 1848,900 1846,933 1820,933" fill="#f5f6f6" fill-opacity="0.95"/>
<polygon points="1888,864 1905,862 1905,888 1892,884" fill="#f5f6f6" fill-opacity="0.95"/>
<polygon points="1420,67 1470,67 1462,84 1436,88" fill="#f5f6f6" fill-opacity="0.95"/>
<polygon points="1404,130 1440,124 1462,150 1440,176 1410,170" fill="#f5f6f6" fill-opacity="0.95"/>
<polygon points="1064,391 1080,396 1098,403 1110,412 1116,417 1124,413 1130,407 1138,404 1142,395 1143,383 1135,372 1131,360 1132,330 1138,318 1150,310 1165,303 1180,296 1192,290 1208,284 1221,279 1232,276 1239,268 1240,250 1240,226 1247,217 1256,212 1266,206 1276,200 1282,196 1284,200 1278,210 1271,222 1266,234 1261,248 1257,262 1254,276 1250,292 1245,308 1242,325 1242,340 1245,352 1246,362 1240,372 1236,384 1233,398 1229,412 1226,428 1230,437 1238,444 1248,452 1257,459 1266,467 1277,475 1289,481 1300,476 1330,475 1360,476 1382,476 1410,478 1410,483 1383,485 1360,488 1330,489 1305,490 1290,489 1283,491 1272,492 1260,493 1248,494 1240,497 1239,502 1244,510 1250,518 1256,526 1261,533 1263,545 1262,560 1263,575 1266,588 1272,598 1276,606 1273,616 1280,626 1290,633 1302,636 1308,645 1311,656 1314,668 1313,680 1316,695 1322,706 1335,703 1347,700 1345,688 1341,677 1338,668 1333,667 1336,657 1348,647 1367,640 1386,635 1407,630 1425,628 1427,633 1422,641 1414,648 1412,657 1415,667 1430,672 1450,673 1466,672 1478,676 1484,684 1480,692 1470,697 1458,704 1448,715 1443,730 1446,745 1452,760 1458,772 1466,785 1476,795 1488,803 1502,816 1514,832 1522,852 1526,880 1516,910 1510,933 1064,933" fill="#77d1e7"/>
<polygon points="1144.4,325.8 1160.5,316.1 1186.2,312.9 1199,316.1 1205.5,332.2 1202.3,345.1 1205.5,357.9 1199,364.4 1192.6,351.5 1183,367.6 1173.3,370.8 1166.9,357.9 1157.2,377.2 1150.8,380.5 1144.4,364.4 1147.6,351.5 1141.2,341.9" fill="#b6edd5"/>
<polygon points="1144.4,325.8 1160.5,316.1 1186.2,312.9 1199,316.1 1205.5,332.2 1202.3,345.1 1205.5,357.9 1199,364.4 1192.6,351.5 1183,367.6 1173.3,370.8 1166.9,357.9 1157.2,377.2 1150.8,380.5 1144.4,364.4 1147.6,351.5 1141.2,341.9" fill="url(#hs)" fill-opacity="0.7"/>
<polygon points="1210.3,300.1 1218.3,296.8 1223.2,309.7 1218.3,325.8 1210.3,319.4" fill="#b6edd5"/>
<polygon points="1210.3,300.1 1218.3,296.8 1223.2,309.7 1218.3,325.8 1210.3,319.4" fill="url(#hs)" fill-opacity="0.7"/>
<polygon points="1176.5,409.5 1199,396 1212.5,396 1219.3,409.5 1208,432.1 1190,450.1 1169.8,452.3 1163,441.1 1167.5,423" fill="#b6edd5"/>
<polygon points="1176.5,409.5 1199,396 1212.5,396 1219.3,409.5 1208,432.1 1190,450.1 1169.8,452.3 1163,441.1 1167.5,423" fill="url(#hs)" fill-opacity="0.7"/>
<polygon points="1138.3,405 1149.5,401.7 1158.5,405 1154,414 1140.5,414" fill="#b6edd5"/>
<polygon points="1138.3,405 1149.5,401.7 1158.5,405 1154,414 1140.5,414" fill="url(#hs)" fill-opacity="0.7"/>
<polygon points="1142.8,427.6 1149.5,427.6 1147.3,434.3 1141.7,433.2" fill="#b6edd5"/>
<polygon points="1142.8,427.6 1149.5,427.6 1147.3,434.3 1141.7,433.2" fill="url(#hs)" fill-opacity="0.7"/>
<polygon points="1064,640 1070.9,643.4 1079.4,657.1 1084.6,672.6 1082,678.6 1072.6,669.1 1064,660.6" fill="#b6edd5"/>
<polygon points="1064,640 1070.9,643.4 1079.4,657.1 1084.6,672.6 1082,678.6 1072.6,669.1 1064,660.6" fill="url(#hs)" fill-opacity="0.7"/>
<polygon points="1088.9,680.3 1095.7,681.1 1103.4,693.1 1120.6,712 1141.1,725.7 1161.7,736 1184,749.7 1199.4,756.6 1208,770.3 1213.2,785.7 1201.2,787.4 1184,782.3 1173.7,763.4 1160,753.1 1136,736 1115.4,724 1098.3,705.1 1089.7,689.7" fill="#b6edd5"/>
<polygon points="1088.9,680.3 1095.7,681.1 1103.4,693.1 1120.6,712 1141.1,725.7 1161.7,736 1184,749.7 1199.4,756.6 1208,770.3 1213.2,785.7 1201.2,787.4 1184,782.3 1173.7,763.4 1160,753.1 1136,736 1115.4,724 1098.3,705.1 1089.7,689.7" fill="url(#hs)" fill-opacity="0.7"/>
<polygon points="1082.9,729.1 1089.7,730 1103.4,741.1 1115.4,749.7 1129.1,766.9 1141.1,782.3 1156.6,790.9 1170.3,804.6 1160,811.4 1098.3,811.4 1103.4,785.7 1112,777.2 1108.6,760 1101.7,758.3 1105.1,770.3 1098.3,777.2 1089.7,763.4 1086.3,749.7 1086.3,742.9" fill="#b6edd5"/>
<polygon points="1082.9,729.1 1089.7,730 1103.4,741.1 1115.4,749.7 1129.1,766.9 1141.1,782.3 1156.6,790.9 1170.3,804.6 1160,811.4 1098.3,811.4 1103.4,785.7 1112,777.2 1108.6,760 1101.7,758.3 1105.1,770.3 1098.3,777.2 1089.7,763.4 1086.3,749.7 1086.3,742.9" fill="url(#hs)" fill-opacity="0.7"/>
<polygon points="1064,705.1 1067.4,708.6 1068.3,732.6 1064,733.4" fill="#b6edd5"/>
<polygon points="1064,705.1 1067.4,708.6 1068.3,732.6 1064,733.4" fill="url(#hs)" fill-opacity="0.7"/>
<polygon points="1064,789.2 1081.1,792.6 1089.7,801.2 1094.9,821.7 1064,821.7" fill="#b6edd5"/>
<polygon points="1064,789.2 1081.1,792.6 1089.7,801.2 1094.9,821.7 1064,821.7" fill="url(#hs)" fill-opacity="0.7"/>
<polygon points="1218.3,780.6 1226.9,778.9 1242.3,787.4 1245.7,799.4 1235.4,804.6 1221.7,799.4" fill="#b6edd5"/>
<polygon points="1218.3,780.6 1226.9,778.9 1242.3,787.4 1245.7,799.4 1235.4,804.6 1221.7,799.4" fill="url(#hs)" fill-opacity="0.7"/>
<polygon points="1067.4,684.6 1074.3,690.6 1072.6,691.4 1066.6,686.3" fill="#b6edd5"/>
<polygon points="1067.4,684.6 1074.3,690.6 1072.6,691.4 1066.6,686.3" fill="url(#hs)" fill-opacity="0.7"/>
<polygon points="1081.1,710.3 1087.1,716.3 1085.4,717.1" fill="#b6edd5"/>
<polygon points="1081.1,710.3 1087.1,716.3 1085.4,717.1" fill="url(#hs)" fill-opacity="0.7"/>
<polygon points="1095.7,721.4 1112,734.3 1110.3,735.3 1096.6,724" fill="#b6edd5"/>
<polygon points="1095.7,721.4 1112,734.3 1110.3,735.3 1096.6,724" fill="url(#hs)" fill-opacity="0.7"/>
<polygon points="1286.9,641.7 1304,638.3 1304,650.3 1293.7,657.1 1286.9,674.3 1280,676 1292,653.7" fill="#b6edd5"/>
<polygon points="1286.9,641.7 1304,638.3 1304,650.3 1293.7,657.1 1286.9,674.3 1280,676 1292,653.7" fill="url(#hs)" fill-opacity="0.7"/>
<polygon points="1064,905 1080,900 1120,905 1165,915 1172,933 1064,933" fill="#b6edd5"/>
<polygon points="1064,905 1080,900 1120,905 1165,915 1172,933 1064,933" fill="url(#hs)" fill-opacity="0.7"/>
<polygon points="1128,842 1160,838 1175,850 1150,858 1130,852" fill="#b6edd5"/>
<polygon points="1128,842 1160,838 1175,850 1150,858 1130,852" fill="url(#hs)" fill-opacity="0.7"/>
<polygon points="1196,840 1232,836 1240,850 1210,856" fill="#b6edd5"/>
<polygon points="1196,840 1232,836 1240,850 1210,856" fill="url(#hs)" fill-opacity="0.7"/>
<polygon points="1270,838 1310,830 1335,842 1320,856 1285,854" fill="#b6edd5"/>
<polygon points="1270,838 1310,830 1335,842 1320,856 1285,854" fill="url(#hs)" fill-opacity="0.7"/>
<polygon points="1240,912 1270,905 1300,910 1305,933 1238,933" fill="#b6edd5"/>
<polygon points="1240,912 1270,905 1300,910 1305,933 1238,933" fill="url(#hs)" fill-opacity="0.7"/>
<polygon points="1330,915 1370,905 1400,915 1405,933 1325,933" fill="#b6edd5"/>
<polygon points="1330,915 1370,905 1400,915 1405,933 1325,933" fill="url(#hs)" fill-opacity="0.7"/>
<polygon points="1410,905 1450,900 1480,912 1478,933 1415,933" fill="#b6edd5"/>
<polygon points="1410,905 1450,900 1480,912 1478,933 1415,933" fill="url(#hs)" fill-opacity="0.7"/>
<polygon points="1250,800 1290,796 1300,810 1262,815" fill="#b6edd5"/>
<polygon points="1250,800 1290,796 1300,810 1262,815" fill="url(#hs)" fill-opacity="0.7"/>
<polygon points="1722,147 1734,149 1769,169 1809,195 1849,235 1880,266 1905,280 1905,480 1896,405 1889,344 1880,315 1858,290 1831,253 1796,209 1760,178 1738,156" fill="#77d1e7"/>
<polygon points="1546,322 1553,326 1568,342 1580,356 1583,372 1578,392 1568,408 1554,428 1540,444 1526,458 1518,472 1515,482 1505,482 1508,466 1518,450 1532,434 1544,416 1552,396 1555,376 1551,354 1547,338" fill="#77d1e7"/>
<polyline points="1548,326 1539,306 1517,253 1495,231 1475,169" fill="none" stroke="#77d1e7" stroke-width="2.500" stroke-linejoin="round"/>
<polygon points="1712,376 1700,388 1690,396 1688,420 1690,450 1694,470 1700,488 1690,492 1680,484 1672,470 1672,440 1675,410 1678,396 1690,384 1704,376" fill="#77d1e7"/>
<polyline points="1672,416 1650,432 1628,450 1604,470" fill="none" stroke="#77d1e7" stroke-width="5" stroke-linecap="round"/>
<polyline points="1812,360 1806,380 1804,400" fill="none" stroke="#77d1e7" stroke-width="5" stroke-linecap="round"/>
<polyline points="1412,362 1418,390 1422,426 1412,450 1400,470 1384,480" fill="none" stroke="#77d1e7" stroke-width="4" stroke-linecap="round"/>
<polyline points="1464,366 1468,400 1466,430" fill="none" stroke="#77d1e7" stroke-width="4" stroke-linecap="round"/>
<polyline points="1064,224 1085,214 1105,204 1114,186 1118,164 1140,154 1158,148" fill="none" stroke="#77d1e7" stroke-width="5" stroke-linejoin="round"/>
<polyline points="1064,250 1076,246" fill="none" stroke="#77d1e7" stroke-width="4"/>
<polyline points="1390,76 1402,90 1420,100" fill="none" stroke="#77d1e7" stroke-width="3"/>
<polygon points="1630,852 1640,850 1652,862 1668,870 1682,890 1694,915 1686,918 1670,900 1655,882 1640,872" fill="#77d1e7"/>
<polygon points="1800,640 1812,636 1816,650 1804,656" fill="#77d1e7"/>
<polyline points="1259,531 1285,542 1310,548 1340,546 1372,556 1400,548 1430,540 1460,530 1484,522 1510,528 1540,536 1575,548 1610,566 1640,580 1670,598 1700,600 1730,590 1760,582 1790,572 1820,560 1850,548 1880,540 1905,534" fill="none" stroke-width="5" stroke="#77d1e7" stroke-linecap="round" stroke-linejoin="round"/>
<polyline points="1274,612 1300,604 1325,592 1350,574 1372,557" fill="none" stroke-width="7" stroke="#77d1e7" stroke-linecap="round" stroke-linejoin="round"/>
<polyline points="1508,480 1500,500 1496,522" fill="none" stroke-width="5" stroke="#77d1e7" stroke-linecap="round" stroke-linejoin="round"/>
<polyline points="1694,488 1690,520 1680,560 1672,596" fill="none" stroke-width="3" stroke="#77d1e7" stroke-linecap="round" stroke-linejoin="round"/>
<polyline points="1820,556 1840,530 1870,516 1905,508" fill="none" stroke-width="6" stroke="#77d1e7" stroke-linecap="round" stroke-linejoin="round"/>
<polyline points="1846,546 1872,530 1905,524" fill="none" stroke-width="4" stroke="#77d1e7" stroke-linecap="round" stroke-linejoin="round"/>
<polyline points="1580,548 1600,540 1626,548 1640,566" fill="none" stroke-width="3" stroke="#77d1e7" stroke-linecap="round" stroke-linejoin="round"/>
<polygon points="1244,498 1262,494 1300,492 1345,490 1350,510 1346,540 1300,546 1262,532 1250,514" fill="#eff1f2" fill-opacity="0.8"/>
<polygon points="1345,486 1380,484 1420,478 1465,476 1472,500 1470,520 1440,532 1400,546 1374,552 1346,540" fill="#eff1f2" fill-opacity="0.8"/>
<polygon points="1250,452 1290,452 1330,462 1376,466 1380,478 1330,482 1290,480 1262,464" fill="#eff1f2" fill-opacity="0.8"/>
<polygon points="1384,560 1410,552 1450,552 1480,560 1492,590 1490,630 1476,660 1440,668 1420,664 1418,652 1430,634 1426,624 1400,626 1386,600" fill="#eff1f2" fill-opacity="0.8"/>
<polygon points="1272,548 1330,548 1336,584 1300,592 1274,588" fill="#eff1f2" fill-opacity="0.8"/>
<polygon points="1490,596 1540,592 1548,630 1520,646 1492,640" fill="#eff1f2" fill-opacity="0.8"/>
<polygon points="1650,646 1716,642 1724,668 1690,680 1652,674" fill="#eff1f2" fill-opacity="0.8"/>
<polygon points="1500,526 1560,530 1564,546 1506,542" fill="#eff1f2" fill-opacity="0.8"/>
<polygon points="1318,668 1338,668 1342,700 1326,700" fill="#eff1f2" fill-opacity="0.8"/>
<polygon points="1440,662 1484,664 1490,700 1470,700 1456,700 1444,680" fill="#eff1f2" fill-opacity="0.8"/>
<polygon points="1446,710 1466,706 1480,730 1482,780 1466,784 1450,750" fill="#eff1f2" fill-opacity="0.8"/>
<polygon points="1566,858 1620,846 1640,870 1610,900 1580,920 1560,900" fill="#eff1f2" fill-opacity="0.8"/>
<polygon points="1700,860 1724,856 1728,900 1708,908" fill="#eff1f2" fill-opacity="0.8"/>
<polygon points="1730,712 1752,708 1760,740 1740,750" fill="#eff1f2" fill-opacity="0.8"/>
<polygon points="1834,566 1860,564 1862,592 1838,598" fill="#eff1f2" fill-opacity="0.8"/>
<polygon points="1660,590 1690,588 1694,602 1664,604" fill="#eff1f2" fill-opacity="0.8"/>
<polyline points="1302,120 1296,146 1290,172 1283,198 1272,225 1263,250 1256,276 1247,310 1243,340 1248,360 1250,385 1244,410 1232,432 1246,445 1270,448 1290,452 1301,466 1320,472 1350,476" fill="none" stroke="#97a3d4" stroke-width="1.4" stroke-linejoin="round" stroke-opacity="1"/>
<polyline points="1350,478 1380,500 1410,540 1450,560 1490,575 1540,600 1600,630 1650,650 1690,662 1730,655 1760,630 1790,600 1830,585 1860,580 1905,578" fill="none" stroke="#97a3d4" stroke-width="1.8" stroke-linejoin="round" stroke-opacity="1"/>
<polyline points="1400,500 1440,510 1480,520 1520,540 1560,555 1606,565 1650,575 1680,590 1720,590 1760,575 1790,560 1809,541 1830,520 1870,505 1905,500" fill="none" stroke="#97a3d4" stroke-width="1.4" stroke-linejoin="round" stroke-opacity="1"/>
<polyline points="1340,540 1350,570 1370,600 1400,630 1440,660 1470,680 1486,692 1494,706 1509,730 1530,760 1546,788 1550,820 1552,850 1546,880 1560,910 1590,933" fill="none" stroke="#97a3d4" stroke-width="1.8" stroke-linejoin="round" stroke-opacity="1"/>
<polyline points="1318,646 1350,620 1400,590 1440,570 1478,560 1516,568" fill="none" stroke="#97a3d4" stroke-width="1.4" stroke-linejoin="round" stroke-opacity="1"/>
<polyline points="1064,384 1090,396 1108,402 1122,404 1124,392 1140,386" fill="none" stroke="#97a3d4" stroke-width="1.4" stroke-linejoin="round" stroke-opacity="1"/>
<polyline points="1392,556 1392,624" fill="none" stroke="#97a3d4" stroke-width="1" stroke-linejoin="round" stroke-opacity="0.55"/>
<polyline points="1406,556 1406,624" fill="none" stroke="#97a3d4" stroke-width="1" stroke-linejoin="round" stroke-opacity="0.55"/>
<polyline points="1420,556 1420,624" fill="none" stroke="#97a3d4" stroke-width="1" stroke-linejoin="round" stroke-opacity="0.55"/>
<polyline points="1434,556 1434,668" fill="none" stroke="#97a3d4" stroke-width="1" stroke-linejoin="round" stroke-opacity="0.55"/>
<polyline points="1448,556 1448,668" fill="none" stroke="#97a3d4" stroke-width="1" stroke-linejoin="round" stroke-opacity="0.55"/>
<polyline points="1462,556 1462,668" fill="none" stroke="#97a3d4" stroke-width="1" stroke-linejoin="round" stroke-opacity="0.55"/>
<polyline points="1384,566 1478,566" fill="none" stroke="#97a3d4" stroke-width="1" stroke-linejoin="round" stroke-opacity="0.55"/>
<polyline points="1384,579 1478,579" fill="none" stroke="#97a3d4" stroke-width="1" stroke-linejoin="round" stroke-opacity="0.55"/>
<polyline points="1384,592 1478,592" fill="none" stroke="#97a3d4" stroke-width="1" stroke-linejoin="round" stroke-opacity="0.55"/>
<polyline points="1384,605 1478,605" fill="none" stroke="#97a3d4" stroke-width="1" stroke-linejoin="round" stroke-opacity="0.55"/>
<polyline points="1384,618 1478,618" fill="none" stroke="#97a3d4" stroke-width="1" stroke-linejoin="round" stroke-opacity="0.55"/>
<polyline points="1432,631 1478,631" fill="none" stroke="#97a3d4" stroke-width="1" stroke-linejoin="round" stroke-opacity="0.55"/>
<polyline points="1432,644 1478,644" fill="none" stroke="#97a3d4" stroke-width="1" stroke-linejoin="round" stroke-opacity="0.55"/>
<polyline points="1432,657 1478,657" fill="none" stroke="#97a3d4" stroke-width="1" stroke-linejoin="round" stroke-opacity="0.55"/>
<polyline points="1500,600 1500,676" fill="none" stroke="#97a3d4" stroke-width="1" stroke-linejoin="round" stroke-opacity="0.5"/>
<polyline points="1524,600 1524,676" fill="none" stroke="#97a3d4" stroke-width="1" stroke-linejoin="round" stroke-opacity="0.5"/>
<polyline points="1548,600 1548,676" fill="none" stroke="#97a3d4" stroke-width="1" stroke-linejoin="round" stroke-opacity="0.5"/>
<polyline points="1572,600 1572,676" fill="none" stroke="#97a3d4" stroke-width="1" stroke-linejoin="round" stroke-opacity="0.5"/>
<polyline points="1596,600 1596,676" fill="none" stroke="#97a3d4" stroke-width="1" stroke-linejoin="round" stroke-opacity="0.5"/>
<polyline points="1620,600 1620,676" fill="none" stroke="#97a3d4" stroke-width="1" stroke-linejoin="round" stroke-opacity="0.5"/>
<polyline points="1644,600 1644,676" fill="none" stroke="#97a3d4" stroke-width="1" stroke-linejoin="round" stroke-opacity="0.5"/>
<polyline points="1668,600 1668,676" fill="none" stroke="#97a3d4" stroke-width="1" stroke-linejoin="round" stroke-opacity="0.5"/>
<polyline points="1692,600 1692,676" fill="none" stroke="#97a3d4" stroke-width="1" stroke-linejoin="round" stroke-opacity="0.5"/>
<polyline points="1716,600 1716,676" fill="none" stroke="#97a3d4" stroke-width="1" stroke-linejoin="round" stroke-opacity="0.5"/>
<polyline points="1490,612 1740,612" fill="none" stroke="#97a3d4" stroke-width="1" stroke-linejoin="round" stroke-opacity="0.5"/>
<polyline points="1490,628 1740,628" fill="none" stroke="#97a3d4" stroke-width="1" stroke-linejoin="round" stroke-opacity="0.5"/>
<polyline points="1490,644 1740,644" fill="none" stroke="#97a3d4" stroke-width="1" stroke-linejoin="round" stroke-opacity="0.5"/>
<polyline points="1490,660 1740,660" fill="none" stroke="#97a3d4" stroke-width="1" stroke-linejoin="round" stroke-opacity="0.5"/>
<polyline points="1490,676 1740,676" fill="none" stroke="#97a3d4" stroke-width="1" stroke-linejoin="round" stroke-opacity="0.5"/>
<polyline points="1276,552 1276,586" fill="none" stroke="#97a3d4" stroke-width="1" stroke-linejoin="round" stroke-opacity="0.5"/>
<polyline points="1288,552 1288,586" fill="none" stroke="#97a3d4" stroke-width="1" stroke-linejoin="round" stroke-opacity="0.5"/>
<polyline points="1300,552 1300,586" fill="none" stroke="#97a3d4" stroke-width="1" stroke-linejoin="round" stroke-opacity="0.5"/>
<polyline points="1312,552 1312,586" fill="none" stroke="#97a3d4" stroke-width="1" stroke-linejoin="round" stroke-opacity="0.5"/>
<polyline points="1324,552 1324,586" fill="none" stroke="#97a3d4" stroke-width="1" stroke-linejoin="round" stroke-opacity="0.5"/>
<polyline points="1272,556 1334,556" fill="none" stroke="#97a3d4" stroke-width="1" stroke-linejoin="round" stroke-opacity="0.5"/>
<polyline points="1272,566 1334,566" fill="none" stroke="#97a3d4" stroke-width="1" stroke-linejoin="round" stroke-opacity="0.5"/>
<polyline points="1272,576 1334,576" fill="none" stroke="#97a3d4" stroke-width="1" stroke-linejoin="round" stroke-opacity="0.5"/>
<polyline points="1272,586 1334,586" fill="none" stroke="#97a3d4" stroke-width="1" stroke-linejoin="round" stroke-opacity="0.5"/>
<polyline points="1268,498 1268,540" fill="none" stroke="#97a3d4" stroke-width="1" stroke-linejoin="round" stroke-opacity="0.4"/>
<polyline points="1280,498 1280,540" fill="none" stroke="#97a3d4" stroke-width="1" stroke-linejoin="round" stroke-opacity="0.4"/>
<polyline points="1292,498 1292,540" fill="none" stroke="#97a3d4" stroke-width="1" stroke-linejoin="round" stroke-opacity="0.4"/>
<polyline points="1304,498 1304,540" fill="none" stroke="#97a3d4" stroke-width="1" stroke-linejoin="round" stroke-opacity="0.4"/>
<polyline points="1316,498 1316,540" fill="none" stroke="#97a3d4" stroke-width="1" stroke-linejoin="round" stroke-opacity="0.4"/>
<polyline points="1328,498 1328,540" fill="none" stroke="#97a3d4" stroke-width="1" stroke-linejoin="round" stroke-opacity="0.4"/>
<polyline points="1262,502 1340,502" fill="none" stroke="#97a3d4" stroke-width="1" stroke-linejoin="round" stroke-opacity="0.4"/>
<polyline points="1262,511 1340,511" fill="none" stroke="#97a3d4" stroke-width="1" stroke-linejoin="round" stroke-opacity="0.4"/>
<polyline points="1262,520 1340,520" fill="none" stroke="#97a3d4" stroke-width="1" stroke-linejoin="round" stroke-opacity="0.4"/>
<polyline points="1262,529 1340,529" fill="none" stroke="#97a3d4" stroke-width="1" stroke-linejoin="round" stroke-opacity="0.4"/>
<polyline points="1262,538 1340,538" fill="none" stroke="#97a3d4" stroke-width="1" stroke-linejoin="round" stroke-opacity="0.4"/>
<polyline points="1595,676 1595,933" fill="none" stroke="#97a3d4" stroke-width="1.4" stroke-linejoin="round" stroke-opacity="1"/>
<polyline points="1697,664 1697,692 1694,712 1660,714 1596,714" fill="none" stroke="#97a3d4" stroke-width="1.4" stroke-linejoin="round" stroke-opacity="1"/>
<polyline points="1700,692 1716,712 1736,706 1748,722 1756,752 1748,776 1738,800 1726,820 1732,840 1730,880 1734,905 1728,933" fill="none" stroke="#97a3d4" stroke-width="1.4" stroke-linejoin="round" stroke-opacity="1"/>
<polyline points="1596,764 1646,764 1648,752 1660,744 1670,744 1672,716" fill="none" stroke="#97a3d4" stroke-width="1.4" stroke-linejoin="round" stroke-opacity="1"/>
<polyline points="1670,744 1672,770 1686,786 1686,798 1718,800 1730,812" fill="none" stroke="#97a3d4" stroke-width="1.4" stroke-linejoin="round" stroke-opacity="1"/>
<polyline points="1686,798 1660,822 1640,826 1620,842 1606,852" fill="none" stroke="#97a3d4" stroke-width="1.4" stroke-linejoin="round" stroke-opacity="1"/>
<polyline points="1490,706 1484,760 1540,762 1550,790" fill="none" stroke="#97a3d4" stroke-width="1.4" stroke-linejoin="round" stroke-opacity="1"/>
<polyline points="1770,742 1800,736 1820,750 1840,766" fill="none" stroke="#97a3d4" stroke-width="1" stroke-linejoin="round" stroke-opacity="0.6"/>
<polyline points="1210,687 1500,687 1905,690" fill="none" stroke="#2b2f33" stroke-width="1.3"/>
<polyline points="1210,687 1350,803 1355,812 1355,866 1236,910 1241,933" fill="none" stroke="#2b2f33" stroke-width="1.3"/>
<polyline points="1064,488 1120,470 1180,452 1226,440" fill="none" stroke="#4fb7dd" stroke-width="1" stroke-dasharray="6 4" fill="none"/>
<polyline points="1140,386 1180,392 1218,394 1230,412" fill="none" stroke="#4fb7dd" stroke-width="1" stroke-dasharray="6 4" fill="none"/>
<polyline points="1105,640 1160,660 1230,680 1296,686" fill="none" stroke="#4fb7dd" stroke-width="1" stroke-dasharray="6 4" fill="none"/>
<polyline points="1296,686 1260,724 1216,772 1190,790 1160,796" fill="none" stroke="#4fb7dd" stroke-width="1" stroke-dasharray="6 4" fill="none"/>
<polyline points="1064,806 1095,794" fill="none" stroke="#4fb7dd" stroke-width="1" stroke-dasharray="6 4" fill="none"/>
<g id="labels">
<text x="1298" y="79" font-size="13.5" font-weight="400" fill="#0d7a5f" text-anchor="middle" stroke="#fff" stroke-width="2.6" stroke-linejoin="round" paint-order="stroke" >Mt. Garibaldi</text>
<text x="1287" y="195" font-size="12" font-weight="400" fill="#2f3337" text-anchor="middle" stroke="#fff" stroke-width="2.6" stroke-linejoin="round" paint-order="stroke" >Squamish</text>
<text x="1243" y="222" font-size="12" font-weight="400" fill="#2f3337" text-anchor="middle" stroke="#fff" stroke-width="2.6" stroke-linejoin="round" paint-order="stroke" >Woodfibre</text>
<text x="1263" y="247" font-size="12" font-weight="400" fill="#2f3337" text-anchor="middle" stroke="#fff" stroke-width="2.6" stroke-linejoin="round" paint-order="stroke" >Britannia</text>
<text x="1263" y="259" font-size="12" font-weight="400" fill="#2f3337" text-anchor="middle" stroke="#fff" stroke-width="2.6" stroke-linejoin="round" paint-order="stroke" >Beach</text>
<text x="1261" y="279" font-size="12" font-weight="400" fill="#2f3337" text-anchor="middle" stroke="#fff" stroke-width="2.6" stroke-linejoin="round" paint-order="stroke" >Furry Creek</text>
<text x="1176" y="332" font-size="12" font-weight="400" fill="#2f3337" text-anchor="middle" font-style="italic" stroke="#fff" stroke-width="2.6" stroke-linejoin="round" paint-order="stroke" >Gambier</text>
<text x="1176" y="344" font-size="12" font-weight="400" fill="#2f3337" text-anchor="middle" font-style="italic" stroke="#fff" stroke-width="2.6" stroke-linejoin="round" paint-order="stroke" >Island</text>
<text x="1250" y="367" font-size="12" font-weight="400" fill="#2f3337" text-anchor="middle" stroke="#fff" stroke-width="2.6" stroke-linejoin="round" paint-order="stroke" >Lions Bay</text>
<text x="1064" y="389" font-size="12" font-weight="400" fill="#2f3337" text-anchor="start" stroke="#fff" stroke-width="2.6" stroke-linejoin="round" paint-order="stroke" >Creek</text>
<text x="1121" y="412" font-size="12" font-weight="400" fill="#2f3337" text-anchor="middle" stroke="#fff" stroke-width="2.6" stroke-linejoin="round" paint-order="stroke" >Gibsons</text>
<text x="1743" y="149" font-size="12" font-weight="400" fill="#2f3337" text-anchor="middle" stroke="#fff" stroke-width="2.6" stroke-linejoin="round" paint-order="stroke" >Port Douglas</text>
<text x="1752" y="171" font-size="12" font-weight="400" fill="#2f3337" text-anchor="middle" stroke="#fff" stroke-width="2.6" stroke-linejoin="round" paint-order="stroke" >Tipella</text>
<text x="1624" y="315" font-size="13.5" font-weight="400" fill="#0d7a5f" text-anchor="middle" stroke="#fff" stroke-width="2.6" stroke-linejoin="round" paint-order="stroke" >Mt Judge</text>
<text x="1632" y="328" font-size="13.5" font-weight="400" fill="#0d7a5f" text-anchor="middle" stroke="#fff" stroke-width="2.6" stroke-linejoin="round" paint-order="stroke" >Howay</text>
<text x="1716" y="375" font-size="13.5" font-weight="400" fill="#0d7a5f" text-anchor="middle" stroke="#fff" stroke-width="2.6" stroke-linejoin="round" paint-order="stroke" >Mt Robie Reid</text>
<text x="1582" y="489" font-size="14" font-weight="400" fill="#0d7a5f" text-anchor="middle" stroke="#fff" stroke-width="2.6" stroke-linejoin="round" paint-order="stroke" >Golden Ears</text>
<text x="1582" y="503" font-size="14" font-weight="400" fill="#0d7a5f" text-anchor="middle" stroke="#fff" stroke-width="2.6" stroke-linejoin="round" paint-order="stroke" >Provincial</text>
<text x="1582" y="517" font-size="14" font-weight="400" fill="#0d7a5f" text-anchor="middle" stroke="#fff" stroke-width="2.6" stroke-linejoin="round" paint-order="stroke" >Park</text>
<text transform="translate(1684,458) rotate(-80)" font-size="11.500" fill="#1b86a3" stroke="#c5eef5" stroke-width="1.500" paint-order="stroke">Stave Lake</text>
<text x="1254" y="497" font-size="21" font-weight="400" fill="#2b2f33" text-anchor="start" stroke="#fff" stroke-width="2.6" stroke-linejoin="round" paint-order="stroke" >Van</text>
<text x="1297" y="578" font-size="14.5" font-weight="700" fill="#2b2f33" text-anchor="middle" stroke="#fff" stroke-width="2.6" stroke-linejoin="round" paint-order="stroke" >Richmond</text>
<text x="1431" y="558" font-size="15" font-weight="700" fill="#2b2f33" text-anchor="middle" stroke="#fff" stroke-width="2.6" stroke-linejoin="round" paint-order="stroke" >Surrey</text>
<text x="1347" y="626" font-size="12.5" font-weight="400" fill="#2f3337" text-anchor="middle" stroke="#fff" stroke-width="2.6" stroke-linejoin="round" paint-order="stroke" >Delta</text>
<text x="1449" y="675" font-size="12" font-weight="400" fill="#2f3337" text-anchor="middle" stroke="#fff" stroke-width="2.6" stroke-linejoin="round" paint-order="stroke" >White Rock</text>
<text x="1332" y="701" font-size="12" font-weight="400" fill="#2f3337" text-anchor="middle" stroke="#fff" stroke-width="2.6" stroke-linejoin="round" paint-order="stroke" >Point Roberts</text>
<text x="1476" y="697" font-size="12" font-weight="400" fill="#2f3337" text-anchor="middle" stroke="#fff" stroke-width="2.6" stroke-linejoin="round" paint-order="stroke" >Blaine</text>
<text x="1155" y="746" font-size="11.5" font-weight="400" fill="#2f3337" text-anchor="middle" font-style="italic" stroke="#fff" stroke-width="2.6" stroke-linejoin="round" paint-order="stroke" >Galiano Island</text>
<text x="1197" y="775" font-size="12" font-weight="400" fill="#2f3337" text-anchor="middle" stroke="#fff" stroke-width="2.6" stroke-linejoin="round" paint-order="stroke" >Galiano Island</text>
<text x="1064" y="790" font-size="12" font-weight="400" fill="#2f3337" text-anchor="start" stroke="#fff" stroke-width="2.6" stroke-linejoin="round" paint-order="stroke" >ton</text>
<text x="1064" y="880" font-size="12" font-weight="400" fill="#2f3337" text-anchor="start" stroke="#fff" stroke-width="2.6" stroke-linejoin="round" paint-order="stroke" >ch</text>
<text x="1531" y="570" font-size="12" font-weight="400" fill="#2f3337" text-anchor="middle" stroke="#fff" stroke-width="2.6" stroke-linejoin="round" paint-order="stroke" >Walnut Grove</text>
<text x="1669" y="599" font-size="12.5" font-weight="400" fill="#2f3337" text-anchor="middle" stroke="#fff" stroke-width="2.6" stroke-linejoin="round" paint-order="stroke" >Mission</text>
<text x="1844" y="582" font-size="12.5" font-weight="400" fill="#2f3337" text-anchor="middle" stroke="#fff" stroke-width="2.6" stroke-linejoin="round" paint-order="stroke" >Chilliwack</text>
<text x="1830" y="645" font-size="12" font-weight="400" fill="#2f3337" text-anchor="middle" stroke="#fff" stroke-width="2.6" stroke-linejoin="round" paint-order="stroke" >Cultus Lake</text>
<text x="1561" y="639" font-size="12" font-weight="400" fill="#2f3337" text-anchor="middle" stroke="#fff" stroke-width="2.6" stroke-linejoin="round" paint-order="stroke" >Langley Twp</text>
<text x="1518" y="617" font-size="12.5" font-weight="400" fill="#2f3337" text-anchor="middle" stroke="#fff" stroke-width="2.6" stroke-linejoin="round" paint-order="stroke" >Langley</text>
<text x="1679" y="661" font-size="16.5" font-weight="700" fill="#2b2f33" text-anchor="middle" stroke="#fff" stroke-width="2.6" stroke-linejoin="round" paint-order="stroke" >Abbotsford</text>
<text x="1697" y="693" font-size="12" font-weight="400" fill="#2f3337" text-anchor="middle" stroke="#fff" stroke-width="2.6" stroke-linejoin="round" paint-order="stroke" >Sumas</text>
<text x="1611" y="732" font-size="12" font-weight="400" fill="#2f3337" text-anchor="middle" stroke="#fff" stroke-width="2.6" stroke-linejoin="round" paint-order="stroke" >Lynden</text>
<text x="1844" y="770" font-size="12" font-weight="400" fill="#2f3337" text-anchor="middle" stroke="#fff" stroke-width="2.6" stroke-linejoin="round" paint-order="stroke" >Glacier</text>
<text x="1719" y="814" font-size="12" font-weight="400" fill="#2f3337" text-anchor="middle" stroke="#fff" stroke-width="2.6" stroke-linejoin="round" paint-order="stroke" >Deming</text>
<text x="1547" y="799" font-size="12" font-weight="400" fill="#2f3337" text-anchor="middle" stroke="#fff" stroke-width="2.6" stroke-linejoin="round" paint-order="stroke" >Ferndale</text>
<text x="1611" y="842" font-size="12" font-weight="400" fill="#2f3337" text-anchor="end" stroke="#fff" stroke-width="2.6" stroke-linejoin="round" paint-order="stroke" >Marietta-Alderwood</text>
<text x="1629" y="865" font-size="12" font-weight="400" fill="#2f3337" text-anchor="end" stroke="#fff" stroke-width="2.6" stroke-linejoin="round" paint-order="stroke" >Bellingham</text>
<text x="1660" y="886" font-size="12" font-weight="400" fill="#2f3337" text-anchor="middle" stroke="#fff" stroke-width="2.6" stroke-linejoin="round" paint-order="stroke" >Sudden Valley</text>
<text x="1831" y="838" font-size="14.5" font-weight="400" fill="#0d7a5f" text-anchor="start" stroke="#fff" stroke-width="2.6" stroke-linejoin="round" paint-order="stroke" >Mt B</text>
<text x="1905" y="474" font-size="12" font-weight="400" fill="#2f3337" text-anchor="end" stroke="#fff" stroke-width="2.6" stroke-linejoin="round" paint-order="stroke" >Ha</text>
<text x="1905" y="486" font-size="12" font-weight="400" fill="#2f3337" text-anchor="end" stroke="#fff" stroke-width="2.6" stroke-linejoin="round" paint-order="stroke" >Hot</text>
<text x="1094" y="937" font-size="12" font-weight="400" fill="#2f3337" text-anchor="middle" stroke="#fff" stroke-width="2.6" stroke-linejoin="round" paint-order="stroke" >Mill Bay</text>
</g>
<rect x="1287.0" y="145" width="16" height="14" rx="4" fill="#fff" stroke="#6b7075" stroke-width="0.9"/><text x="1295" y="155.6" font-size="9.500" fill="#3c4043" text-anchor="middle">99</text>
<rect x="1242.0" y="379" width="16" height="14" rx="4" fill="#fff" stroke="#6b7075" stroke-width="0.9"/><text x="1250" y="389.6" font-size="9.500" fill="#3c4043" text-anchor="middle">99</text>
<rect x="1260.0" y="437" width="16" height="14" rx="4" fill="#fff" stroke="#6b7075" stroke-width="0.9"/><text x="1268" y="447.6" font-size="9.500" fill="#3c4043" text-anchor="middle">99</text>
<rect x="1803.0" y="535" width="12" height="14" rx="4" fill="#fff" stroke="#6b7075" stroke-width="0.9"/><text x="1809" y="545.6" font-size="9.500" fill="#3c4043" text-anchor="middle">7</text>
<rect x="1600.0" y="558" width="12" height="14" rx="4" fill="#fff" stroke="#6b7075" stroke-width="0.9"/><text x="1606" y="568.6" font-size="9.500" fill="#3c4043" text-anchor="middle">7</text>
<rect x="1584.0" y="696" width="22" height="14" rx="4" fill="#fff" stroke="#6b7075" stroke-width="0.9"/><text x="1595" y="706.6" font-size="9.500" fill="#3c4043" text-anchor="middle">539</text>
<rect x="1737.0" y="777" width="22" height="14" rx="4" fill="#fff" stroke="#6b7075" stroke-width="0.9"/><text x="1748" y="787.6" font-size="9.500" fill="#3c4043" text-anchor="middle">542</text>
<rect x="1645.0" y="819" width="22" height="14" rx="4" fill="#fff" stroke="#6b7075" stroke-width="0.9"/><text x="1656" y="829.6" font-size="9.500" fill="#3c4043" text-anchor="middle">542</text>
<rect x="1475.0" y="633" width="12" height="14" rx="4" fill="#fff" stroke="#6b7075" stroke-width="0.9"/><text x="1481" y="643.6" font-size="9.500" fill="#3c4043" text-anchor="middle">15</text>
<rect x="1583.0" y="649" width="14" height="14" rx="4" fill="#fff" stroke="#6b7075" stroke-width="0.9"/><text x="1590" y="659.6" font-size="9.500" fill="#3c4043" text-anchor="middle">13</text>
<rect x="1328.0" y="641" width="14" height="14" rx="4" fill="#fff" stroke="#6b7075" stroke-width="0.9"/><text x="1335" y="651.6" font-size="9.500" fill="#3c4043" text-anchor="middle">17</text>
<path d="M1502.500,723.500h13v7c0,5-3.500,7.500-6.500,9c-3-1.500-6.500-4-6.500-9z" fill="#2f66c4" stroke="#fff" stroke-width="0.800"/><path d="M1502.500,723.500h13v3h-13z" fill="#d93a3a"/><text x="1509" y="735.500" font-size="8.500" font-weight="700" fill="#fff" text-anchor="middle">5</text>
<g transform="translate(1671,316)"><path d="M0,14.500 L-5.500,9.200 A10.800,10.800 0 1 1 5.500,9.200 Z" fill="#fff"/><circle r="9" fill="#0f9d6b"/><path d="M-5,4 L-1.500,-4 L0.500,-0.500 L2,-3 L5.500,4 Z" fill="#fff"/></g>
<g transform="translate(1655,369)"><path d="M0,14.500 L-5.500,9.200 A10.800,10.800 0 1 1 5.500,9.200 Z" fill="#fff"/><circle r="9" fill="#0f9d6b"/><path d="M-5,4 L-1.500,-4 L0.500,-0.500 L2,-3 L5.500,4 Z" fill="#fff"/></g>
<g transform="translate(1356,70)"><path d="M0,14.500 L-5.500,9.200 A10.800,10.800 0 1 1 5.500,9.200 Z" fill="#fff"/><circle r="9" fill="#0f9d6b"/><path d="M-5,4 L-1.500,-4 L0.500,-0.500 L2,-3 L5.500,4 Z" fill="#fff"/></g>
<g transform="translate(1905,829)"><path d="M0,14.500 L-5.500,9.200 A10.800,10.800 0 1 1 5.500,9.200 Z" fill="#fff"/><circle r="9" fill="#0f9d6b"/><path d="M-5,4 L-1.500,-4 L0.500,-0.500 L2,-3 L5.500,4 Z" fill="#fff"/></g>
<g transform="translate(1083.5,485.5)"><rect x="-8" y="-8" width="16" height="16" rx="2.500" fill="#0f8a5f"/><path d="M0,-6 1.500,-3 3.500,-4 3,-1 5.500,-1 4,1.500 5,2.500 1,4 0.400,4 0.400,6 -0.400,6 -0.400,4 -1,4 -5,2.500 -4,1.500 -5.500,-1 -3,-1 -3.500,-4 -1.500,-3z" fill="#fff"/></g>
<g transform="translate(1576,608)"><rect x="-8" y="-8" width="16" height="16" rx="2.500" fill="#2a8f94"/><path d="M0,-6 1.500,-3 3.500,-4 3,-1 5.500,-1 4,1.500 5,2.500 1,4 0.400,4 0.400,6 -0.400,6 -0.400,4 -1,4 -5,2.500 -4,1.500 -5.500,-1 -3,-1 -3.500,-4 -1.500,-3z" fill="#fff"/></g>
<g transform="translate(1756,631)"><rect x="-8" y="-8" width="16" height="16" rx="2.500" fill="#2a8f94"/><path d="M0,-6 1.500,-3 3.500,-4 3,-1 5.500,-1 4,1.500 5,2.500 1,4 0.400,4 0.400,6 -0.400,6 -0.400,4 -1,4 -5,2.500 -4,1.500 -5.500,-1 -3,-1 -3.500,-4 -1.500,-3z" fill="#fff"/></g>
<polygon points="1306,166 1313,167 1334,277 1357,396 1371,466 1366,480 1340,486 1300,490 1289,485 1273,477 1250,456 1226,432 1234,396 1244,351 1262,270 1280,200" fill="#fd9a63" fill-opacity="0.5" stroke="#fd9a63" stroke-opacity="0.85" stroke-width="4" stroke-dasharray="10 6" stroke-linejoin="round" stroke-linecap="butt"/>
<polygon points="1366,483 1456,468 1471,508 1438,528 1415,544 1379,550 1366,530 1350,500" fill="#9696f0" fill-opacity="0.5" stroke="#9696f0" stroke-opacity="0.85" stroke-width="4" stroke-dasharray="10 6" stroke-linejoin="round" stroke-linecap="butt"/>
<polygon points="1260,505 1296,495 1334,526 1296,546" fill="#f5cb62" fill-opacity="0.5" stroke="#f5cb62" stroke-opacity="0.85" stroke-width="4" stroke-dasharray="10 6" stroke-linejoin="round" stroke-linecap="butt"/>
<polygon points="1298,502 1348,491 1357,504 1379,541 1372,555 1334,530" fill="#0da04d" fill-opacity="0.58" stroke="#0da04d" stroke-opacity="0.95" stroke-width="3.5" stroke-dasharray="10 6" stroke-linejoin="round" stroke-linecap="butt"/>
<polygon points="1377,569 1415,552 1447,549 1456,553 1477,578 1500,618 1484,636 1460,660 1447,674 1379,668 1318,666 1307,654 1309,643 1334,611 1352,586" fill="#e02a2a" fill-opacity="0.47" stroke="#e02a2a" stroke-opacity="0.95" stroke-width="3.5" stroke-dasharray="10 6" stroke-linejoin="round" stroke-linecap="butt"/>
<polygon points="1500,517 1513,516 1558,524 1664,541 1783,562 1831,571 1842,586 1835,616 1831,618 1738,647 1687,664 1619,660 1552,654 1491,645 1484,632 1478,610 1479,589 1480,568 1485,551 1493,532" fill="#2868cd" fill-opacity="0.47" stroke="#2868cd" stroke-opacity="0.95" stroke-width="3.5" stroke-dasharray="10 6" stroke-linejoin="round" stroke-linecap="butt"/>
<circle cx="1292" cy="171" r="11.5" fill="#fd9a63" stroke="#111" stroke-width="1.200"/>
<text x="1292" y="175.1" font-size="11.5" font-weight="700" fill="#334155" text-anchor="middle">24</text>
<circle cx="1229" cy="416" r="11.5" fill="#fd9a63" stroke="#111" stroke-width="1.200"/>
<text x="1229" y="420.1" font-size="11.5" font-weight="700" fill="#334155" text-anchor="middle">2</text>
<circle cx="1286" cy="442" r="11.5" fill="#fd9a63" stroke="#111" stroke-width="1.200"/>
<text x="1286" y="446.1" font-size="11.5" font-weight="700" fill="#334155" text-anchor="middle">33</text>
<circle cx="1364" cy="446" r="11.5" fill="#fd9a63" stroke="#111" stroke-width="1.200"/>
<text x="1364" y="450.1" font-size="11.5" font-weight="700" fill="#334155" text-anchor="middle">6</text>
<circle cx="1332" cy="459" r="11.5" fill="#fd9a63" stroke="#111" stroke-width="1.200"/>
<text x="1332" y="463.1" font-size="11.5" font-weight="700" fill="#334155" text-anchor="middle">72</text>
<circle cx="1311" cy="418" r="5.200" fill="#fd9a63" stroke="#fff" stroke-width="1.500"/>
<path d="M1259,488 L1268,504 L1250,504 Z" fill="#f5cb62" stroke="#1f2937" stroke-width="1.200" stroke-linejoin="round"/>
<circle cx="1303" cy="475" r="11.5" fill="#6a9cf0" stroke="#111" stroke-width="1.200"/>
<circle cx="1302" cy="478" r="11.5" fill="#5ed694" stroke="#111" stroke-width="1.200"/>
<text x="1302" y="482.1" font-size="11.5" font-weight="700" fill="#334155" text-anchor="middle">90</text>
<circle cx="1359" cy="480" r="11.5" fill="#f5cb62" stroke="#111" stroke-width="1.200"/>
<text x="1359" y="484.1" font-size="11.5" font-weight="700" fill="#334155" text-anchor="middle">8</text>
<circle cx="1290" cy="521" r="11.5" fill="#f5cb62" stroke="#111" stroke-width="1.200"/>
<text x="1290" y="525.1" font-size="11.5" font-weight="700" fill="#334155" text-anchor="middle">7</text>
<circle cx="1403" cy="488" r="11.5" fill="#9696f0" stroke="#111" stroke-width="1.200"/>
<text x="1403" y="492.1" font-size="11.5" font-weight="700" fill="#334155" text-anchor="middle">23</text>
<circle cx="1442" cy="495" r="11.5" fill="#9696f0" stroke="#111" stroke-width="1.200"/>
<text x="1442" y="499.1" font-size="11.5" font-weight="700" fill="#334155" text-anchor="middle">53</text>
<circle cx="1354" cy="521" r="11.5" fill="#9696f0" stroke="#111" stroke-width="1.200"/>
<text x="1354" y="525.1" font-size="11.5" font-weight="700" fill="#334155" text-anchor="middle">1</text>
<circle cx="1394" cy="525.5" r="11.5" fill="#9696f0" stroke="#111" stroke-width="1.200"/>
<text x="1394" y="529.6" font-size="11.5" font-weight="700" fill="#334155" text-anchor="middle">5</text>
<circle cx="1325" cy="489" r="11.5" fill="#0da04d" stroke="#111" stroke-width="1.200"/>
<text x="1325" y="493.1" font-size="10.5" font-weight="700" fill="#fff" text-anchor="middle">125</text>
<circle cx="1363" cy="527" r="11.5" fill="#0da04d" stroke="#111" stroke-width="1.200"/>
<text x="1363" y="531.1" font-size="11.5" font-weight="700" fill="#fff" text-anchor="middle">32</text>
<circle cx="1303" cy="487" r="5.200" fill="#6a9cf0" stroke="#fff" stroke-width="1.500"/>
<circle cx="1310.5" cy="501" r="5.200" fill="#f5cb62" stroke="#fff" stroke-width="1.500"/>
<circle cx="1332" cy="506.5" r="5.200" fill="#0da04d" stroke="#fff" stroke-width="1.500"/>
<circle cx="1397" cy="521.5" r="5.200" fill="#9696f0" stroke="#fff" stroke-width="1.500"/>
<circle cx="1479" cy="589" r="11.5" fill="#2868cd" stroke="#111" stroke-width="1.200"/>
<text x="1479" y="593.1" font-size="11.5" font-weight="700" fill="#fff" text-anchor="middle">5</text>
<circle cx="1435" cy="550" r="11.5" fill="#e02a2a" stroke="#111" stroke-width="1.200"/>
<text x="1435" y="554.1" font-size="11.5" font-weight="700" fill="#fff" text-anchor="middle">76</text>
<circle cx="1365" cy="569" r="11.5" fill="#e02a2a" stroke="#111" stroke-width="1.200"/>
<text x="1365" y="573.1" font-size="11.5" font-weight="700" fill="#fff" text-anchor="middle">3</text>
<circle cx="1462" cy="600" r="11.5" fill="#e02a2a" stroke="#111" stroke-width="1.200"/>
<text x="1462" y="604.1" font-size="11.5" font-weight="700" fill="#fff" text-anchor="middle">10</text>
<circle cx="1318" cy="642" r="11.5" fill="#e02a2a" stroke="#111" stroke-width="1.200"/>
<text x="1318" y="646.1" font-size="11.5" font-weight="700" fill="#fff" text-anchor="middle">21</text>
<circle cx="1448" cy="649" r="11.5" fill="#e02a2a" stroke="#111" stroke-width="1.200"/>
<text x="1448" y="653.1" font-size="11.5" font-weight="700" fill="#fff" text-anchor="middle">30</text>
<circle cx="1433" cy="597" r="5.200" fill="#e02a2a" stroke="#fff" stroke-width="1.500"/>
<circle cx="1501" cy="518" r="11.5" fill="#2868cd" stroke="#111" stroke-width="1.200"/>
<text x="1501" y="522.1" font-size="11.5" font-weight="700" fill="#fff" text-anchor="middle">7</text>
<circle cx="1543" cy="523" r="11.5" fill="#2868cd" stroke="#111" stroke-width="1.200"/>
<text x="1543" y="527.1" font-size="11.5" font-weight="700" fill="#fff" text-anchor="middle">9</text>
<circle cx="1516" cy="568" r="11.5" fill="#2868cd" stroke="#111" stroke-width="1.200"/>
<text x="1516" y="572.1" font-size="11.5" font-weight="700" fill="#fff" text-anchor="middle">28</text>
<circle cx="1678" cy="575" r="11.5" fill="#2868cd" stroke="#111" stroke-width="1.200"/>
<text x="1678" y="579.1" font-size="11.5" font-weight="700" fill="#fff" text-anchor="middle">10</text>
<circle cx="1831" cy="580" r="11.5" fill="#2868cd" stroke="#111" stroke-width="1.200"/>
<text x="1831" y="584.1" font-size="11.5" font-weight="700" fill="#fff" text-anchor="middle">19</text>
<circle cx="1516" cy="609" r="11.5" fill="#2868cd" stroke="#111" stroke-width="1.200"/>
<text x="1516" y="613.1" font-size="11.5" font-weight="700" fill="#fff" text-anchor="middle">18</text>
<circle cx="1604" cy="623" r="11.5" fill="#2868cd" stroke="#111" stroke-width="1.200"/>
<text x="1604" y="627.1" font-size="11.5" font-weight="700" fill="#fff" text-anchor="middle">7</text>
<circle cx="1675" cy="644" r="11.5" fill="#2868cd" stroke="#111" stroke-width="1.200"/>
<text x="1675" y="648.1" font-size="11.5" font-weight="700" fill="#fff" text-anchor="middle">19</text>
<path d="M1792,576 L1801,592 L1783,592 Z" fill="#2868cd" stroke="#1f2937" stroke-width="1.200" stroke-linejoin="round"/>
<path d="M1555,623 L1564,639 L1546,639 Z" fill="#2868cd" stroke="#1f2937" stroke-width="1.200" stroke-linejoin="round"/>
<text x="1555" y="648.500" font-size="11.500" fill="#1f2937" text-anchor="middle">2</text>
<text x="1074.500" y="926.500" font-size="17.500" stroke="#fff" stroke-width="2.500" stroke-linejoin="round" paint-order="stroke" letter-spacing="-0.300"><tspan fill="#4285f4">G</tspan><tspan fill="#ea4335">o</tspan><tspan fill="#fbbc05">o</tspan><tspan fill="#4285f4">g</tspan><tspan fill="#34a853">l</tspan><tspan fill="#ea4335">e</tspan></text>
<rect x="1553" y="920" width="352" height="13" fill="#f5f5f5" fill-opacity="0.75"/>
<text x="1558" y="930" font-size="10" fill="#1a1a1a">Keyboard shortcuts</text>
<text x="1656.5" y="930" font-size="10" fill="#1a1a1a">Map Data ©2025 Google</text>
<text x="1779" y="930" font-size="10" fill="#1a1a1a">Terms</text>
<text x="1818.5" y="930" font-size="10" fill="#1a1a1a">Report a map error</text>
</svg>
<div class="panel" style="left:12px;top:8px;width:351px;height:52px">
  <div class="abs" style="left:15px;top:17px;font-size:16px;line-height:20px;color:#1e293b;white-space:nowrap;letter-spacing:.15px">Scenarios</div>
  <div class="abs" style="left:95px;top:8px;width:240px;height:36px;border:1px solid #cbd5e1;border-radius:6px;background:#fff">
    <div class="abs" style="left:12px;top:8px;font-size:16px;line-height:20px;color:#1e293b;letter-spacing:.15px">Current</div>
    <svg class="abs" style="left:182px;top:9px" width="16" height="16" viewBox="0 0 16 16" fill="none" stroke="#64748b" stroke-width="1.300" stroke-linecap="round"><path d="M2.500 2.500l11 11M13.500 2.500l-11 11"/></svg>
    <svg class="abs" style="left:209px;top:10px" width="16" height="16" viewBox="0 0 16 16" fill="none" stroke="#64748b" stroke-width="1.300" stroke-linecap="round" stroke-linejoin="round"><path d="M2 5l6 6 6-6"/></svg>
  </div>
</div>
<div class="panel" style="left:371px;top:8px;width:179px;height:52px">
  <svg class="abs" style="left:13px;top:18px" width="16" height="16" viewBox="0 0 16 16" fill="none" stroke="#1e293b" stroke-width="1.400" stroke-linecap="round"><path d="M8 1v14M1 8h14"/></svg>
  <div class="abs" style="left:37px;top:17px;font-size:16px;line-height:20px;color:#1e293b;white-space:nowrap;letter-spacing:.2px">New Optimization</div>
</div>
<div class="panel" style="left:10px;top:731px;width:510px;height:44px">
  <div class="abs" style="left:15px;top:10px;width:40px;height:24px;border-radius:12px;background:#c5d0df"><div class="abs" style="left:3px;top:3px;width:18px;height:18px;border-radius:50%;background:#fff"></div></div>
  <div class="abs" style="left:65px;top:13px;font-size:16px;line-height:20px;color:#1e293b;white-space:nowrap;letter-spacing:.25px">Geocode Accuracy</div>
  <div class="gc" style="left:232px;background:#2d3748"></div><div class="gt" style="left:258px">0</div>
  <div class="gc" style="left:282px;background:#12a150"></div><div class="gt" style="left:307px">931</div>
  <div class="gc" style="left:349px;background:#fb6f20"></div><div class="gt" style="left:373px">17</div>
  <div class="gc" style="left:404px;background:#c2191f"></div><div class="gt" style="left:429px">4</div>
</div>
<div class="panel" style="left:10px;top:783px;width:510px;height:60px">
  <svg class="abs" style="left:14px;top:14px" width="32" height="32" viewBox="0 0 32 32"><path d="M16.500 2.500 28 8.500 30 23 15.500 29.500 2.500 21 5 8.500z" fill="#dfe6ee"/></svg>
  <div class="lt" style="left:56px">Initial Scenario</div>
  <svg class="abs" style="left:170px;top:14px" width="32" height="32" viewBox="0 0 32 32"><path d="M16.500 2.500 29 9.500 30 24 14.500 29.500 2 21.500 4.500 9z" fill="#dfe6ee" stroke="#475569" stroke-width="2" stroke-dasharray="5 3" stroke-linejoin="round"/></svg>
  <div class="lt" style="left:212px">Current Scenario</div>
  <svg class="abs" style="left:344px;top:14px" width="32" height="32" viewBox="0 0 32 32"><path d="M16.500 2.500 29 9.500 30 24 14.500 29.500 2 21.500 4.500 9z" fill="#dfe6ee" stroke="#475569" stroke-width="2" stroke-linejoin="round"/></svg>
  <div class="lt" style="left:386px">Other Scenario</div>
</div>
<div class="rbtn" style="top:611px"><svg width="20" height="20" viewBox="0 0 20 20" fill="none" stroke="#1e293b" stroke-width="1.400" stroke-linejoin="round"><path d="M3 17l1-4.200L14.200 2.600a1.500 1.500 0 0 1 2.100 0l1.100 1.100a1.500 1.500 0 0 1 0 2.100L7.200 16z"/></svg></div>
<div class="rbtn" style="top:659px"><svg width="20" height="20" viewBox="0 0 20 20" fill="none" stroke="#1e293b" stroke-width="1.500" stroke-linejoin="round" stroke-linecap="round"><path d="M10 2.200 17.800 8 10 13.800 2.200 8z"/><path d="M2.200 12 10 17.800 17.800 12"/></svg></div>
<div class="rbtn" style="top:707px"><svg width="20" height="20" viewBox="0 0 20 20" fill="none" stroke="#1e293b" stroke-width="1.500" stroke-linejoin="round"><path d="M2.500 4.500 7.500 3l5 1.500 5-1.500v12.500l-5 1.500-5-1.500-5 1.500zM7.500 3v12.500M12.500 4.500V17"/></svg></div>
<div class="rbtn" style="top:755px"><svg width="20" height="20" viewBox="0 0 20 20" fill="none" stroke="#1e293b" stroke-width="1.500" stroke-linecap="round"><path d="M10 2.500v15M2.500 10h15"/></svg></div>
<div class="rbtn" style="top:803px"><svg width="20" height="20" viewBox="0 0 20 20" fill="none" stroke="#1e293b" stroke-width="1.500" stroke-linecap="round"><path d="M2.500 10h15"/></svg></div>

</div>

<div class="abs" style="left:0;top:923px;width:6px;height:10px;background:radial-gradient(ellipse 6px 10px at 100% 0%,rgba(0,0,0,0) 94%,#6a4a2a 100%)"></div>
</body>
</html>
